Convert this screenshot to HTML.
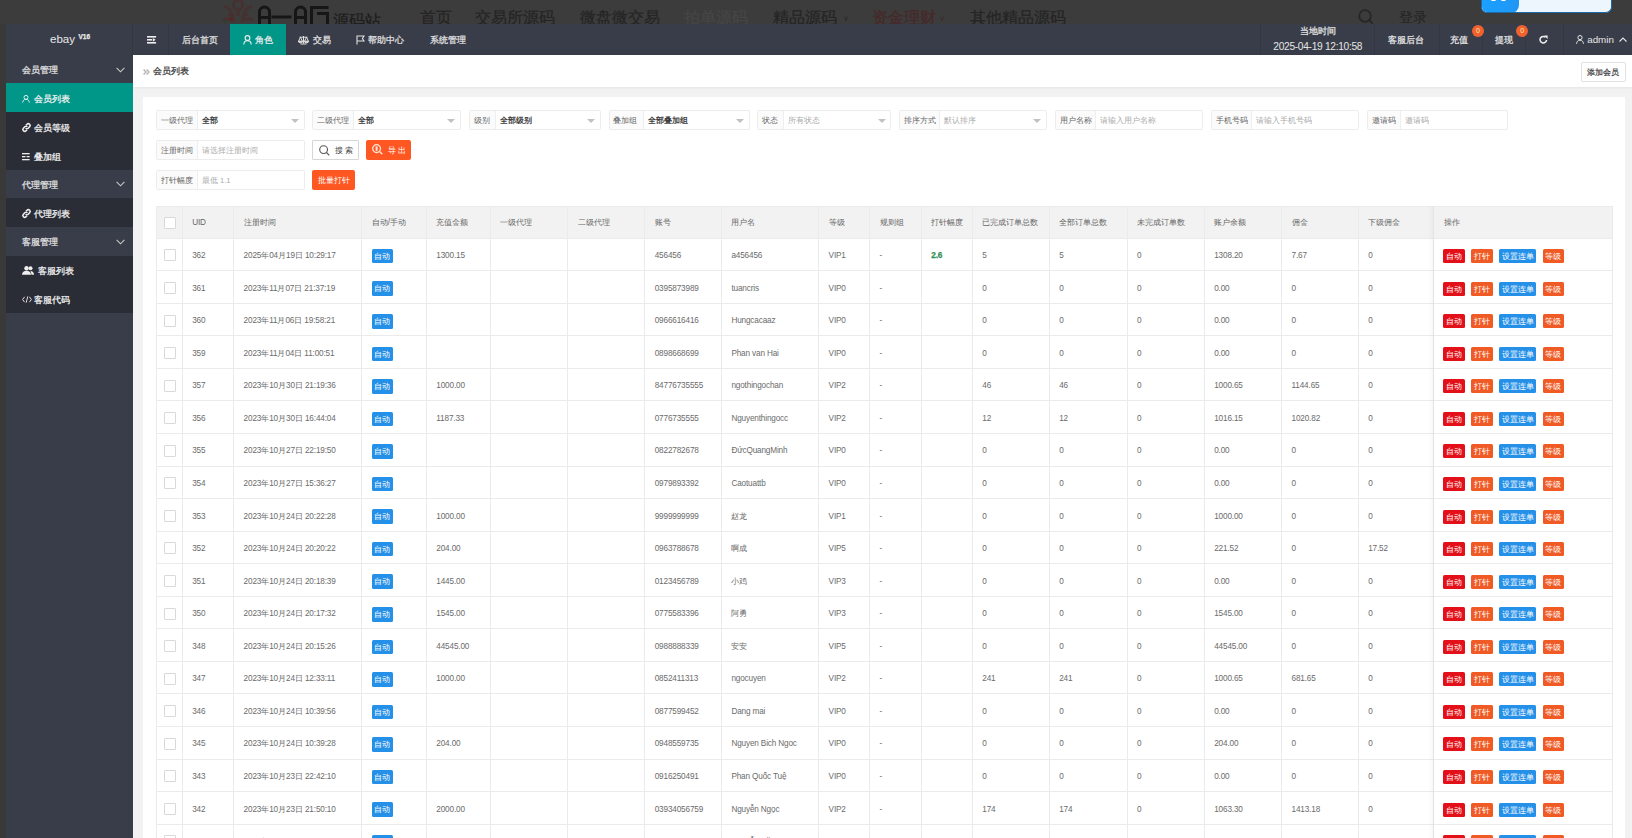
<!DOCTYPE html>
<html><head><meta charset="utf-8"><title>member list</title>
<style>
*{margin:0;padding:0;box-sizing:border-box}
html,body{width:1632px;height:838px;overflow:hidden}
body{position:relative;background:#f2f2f2;font-family:"Liberation Sans",sans-serif;color:#666}
.ab{position:absolute}
.t{position:absolute;white-space:nowrap}
.s{-webkit-text-stroke:0.25px currentColor}
svg{position:absolute;overflow:visible}
</style></head><body>

<div class="ab" style="left:0;top:0;width:1632px;height:24px;background:#3c3c3c;overflow:hidden">
<svg style="left:222px;top:0" width="36" height="24" viewBox="0 0 36 24"><g fill="none" stroke="#4a2e2e" stroke-width="2.6" opacity="0.85"><ellipse cx="16" cy="5" rx="4.5" ry="5"/><path d="M16 10v6M2 6c4 1 8 5 9 11M30 6c-4 1-8 5-9 11M6 14c3 0 5 3 6 8M26 14c-3 0-5 3-6 8M1 20c3-2 6-2 9 1M31 20c-3-2-6-2-9 1"/></g><circle cx="9" cy="19" r="2" fill="#5a2424"/><circle cx="4" cy="22" r="1.5" fill="#2f3f30"/></svg>
<svg style="left:257px;top:5px" width="74" height="20" viewBox="0 0 74 20"><g fill="none" stroke="#161616" stroke-width="3"><path d="M2.5 20V7a5 5 0 0 1 10 0v13M2.5 12.5h10"/><path d="M14.5 12h20"/><path d="M38.5 20V7a5 5 0 0 1 10 0v13M38.5 12.5h10"/><path d="M54.5 20V2.5h17M60 8.5h10.5V20"/></g></svg>
<div class="t s" style="left:333.00px;top:13.20px;font-size:16px;line-height:16px;color:#1c1c1c;letter-spacing:0px">源码站</div>
<div class="t s" style="left:420.00px;top:9.30px;font-size:16.2px;line-height:16.2px;color:#242424;">首页</div>
<div class="t s" style="left:474.80px;top:9.30px;font-size:16.2px;line-height:16.2px;color:#242424;">交易所源码</div>
<div class="t s" style="left:580.00px;top:9.30px;font-size:16.2px;line-height:16.2px;color:#242424;">微盘微交易</div>
<div class="t s" style="left:684.00px;top:9.30px;font-size:16.2px;line-height:16.2px;color:#464646;">拍单源码</div>
<div class="t s" style="left:773.00px;top:9.30px;font-size:16.2px;line-height:16.2px;color:#242424;">精品源码</div>
<div class="t s" style="left:872.40px;top:9.30px;font-size:16.2px;line-height:16.2px;color:#472828;">资金理财</div>
<div class="t s" style="left:970.40px;top:9.30px;font-size:16.2px;line-height:16.2px;color:#242424;">其他精品源码</div>
<div class="t " style="left:843.00px;top:15.40px;font-size:8px;line-height:8px;color:#2a2a2a;">&#8744;</div>
<div class="t " style="left:939.00px;top:15.40px;font-size:8px;line-height:8px;color:#3a2a2a;">&#8744;</div>
<svg style="left:1358px;top:8.5px" width="16" height="16" viewBox="0 0 16 16"><g fill="none" stroke="#262626" stroke-width="1.8"><circle cx="7" cy="7" r="5.8"/><path d="M11.2 11.2l3.6 3.6"/></g></svg>
<div class="t " style="left:1398.80px;top:9.70px;font-size:14px;line-height:14px;color:#222;">登录</div>
<div class="ab" style="left:1481px;top:-6px;width:131px;height:19px;background:#eef6fd;border:1px solid #1b6aa6;border-top:none;border-radius:0 0 6px 6px;overflow:hidden"><div class="ab" style="left:0;top:0;width:37px;height:19px;background:linear-gradient(90deg,#1aa0ff,#2196f3);border-radius:0 0 8px 6px"></div><div class="ab" style="left:9px;top:4px;width:5px;height:3px;background:#fff;border-radius:2px"></div><div class="ab" style="left:19px;top:4px;width:5px;height:3px;background:#fff;border-radius:2px"></div></div>
</div>
<div class="ab" style="left:0.00px;top:24.00px;width:6.00px;height:814.00px;background:#393937;"></div>
<div class="ab" style="left:6.00px;top:24.00px;width:1626.00px;height:31.00px;background:#393d49;"></div>
<div class="ab" style="left:132.00px;top:24.00px;width:1.00px;height:31.00px;background:#343742;"></div>
<div class="ab" style="left:168.00px;top:24.00px;width:1.00px;height:31.00px;background:#343742;"></div>
<div class="ab" style="left:1260.00px;top:24.00px;width:1.00px;height:31.00px;background:#343742;"></div>
<div class="ab" style="left:1374.00px;top:24.00px;width:1.00px;height:31.00px;background:#343742;"></div>
<div class="ab" style="left:1438.50px;top:24.00px;width:1.00px;height:31.00px;background:#343742;"></div>
<div class="ab" style="left:1482.00px;top:24.00px;width:1.00px;height:31.00px;background:#343742;"></div>
<div class="ab" style="left:1525.00px;top:24.00px;width:1.00px;height:31.00px;background:#343742;"></div>
<div class="ab" style="left:1562.50px;top:24.00px;width:1.00px;height:31.00px;background:#343742;"></div>
<div class="t " style="left:50.00px;top:33.85px;font-size:11.5px;line-height:11.5px;color:#e9e9e9;">ebay</div>
<div class="t s" style="left:78.50px;top:34.15px;font-size:6.5px;line-height:6.5px;color:#e9e9e9;font-weight:bold">V16</div>
<svg style="left:146.9px;top:35.6px" width="10" height="8" viewBox="0 0 10 8"><g fill="#eeeeee"><rect x="0" y="0" width="9.1" height="1.6"/><rect x="0" y="3" width="5.2" height="1.6"/><rect x="0" y="6" width="9.1" height="1.6"/><path d="M5.9 1.9L8.6 3.8L5.9 5.7z"/></g></svg>
<div class="t s" style="left:181.50px;top:35.90px;font-size:9px;line-height:9px;color:#e0e0e0;">后台首页</div>
<div class="ab" style="left:230.00px;top:24.00px;width:56.00px;height:31.00px;background:#009688;"></div>
<svg style="left:243px;top:34.5px" width="9" height="10" viewBox="0 0 9 10"><g fill="none" stroke="#eee" stroke-width="1.1"><circle cx="4.5" cy="3" r="2.4"/><path d="M0.8 9.6c0-2.4 1.6-3.9 3.7-3.9s3.7 1.5 3.7 3.9"/></g></svg>
<div class="t s" style="left:254.50px;top:35.90px;font-size:9px;line-height:9px;color:#eeeeee;">角色</div>
<svg style="left:298px;top:34.8px" width="11" height="10" viewBox="0 0 11 10"><g fill="none" stroke="#e0e0e0" stroke-width="1"><path d="M5.5 1v7.5M1.5 2.2h8M2.5 2.2L0.6 6.2M2.5 2.2L4.4 6.2M8.5 2.2L6.6 6.2M8.5 2.2L10.4 6.2M2.5 9h6"/><path d="M0.4 6.2h4.2a2.1 1.6 0 0 1-4.2 0zM6.4 6.2h4.2a2.1 1.6 0 0 1-4.2 0z" fill="#e0e0e0"/></g></svg>
<div class="t s" style="left:312.50px;top:35.90px;font-size:9px;line-height:9px;color:#e0e0e0;">交易</div>
<svg style="left:356px;top:34.5px" width="9" height="10" viewBox="0 0 9 10"><g fill="none" stroke="#e0e0e0" stroke-width="1.1"><path d="M1 0.5v9M1 1h7l-1.6 2.5L8 6H1"/></g></svg>
<div class="t s" style="left:368.00px;top:35.90px;font-size:9px;line-height:9px;color:#e0e0e0;">帮助中心</div>
<div class="t s" style="left:430.00px;top:35.90px;font-size:9px;line-height:9px;color:#e0e0e0;">系统管理</div>
<div class="t s" style="left:1299.60px;top:27.42px;font-size:8.75px;line-height:8.75px;color:#e6e6e6;">当地时间</div>
<div class="t " style="left:1273.30px;top:41.70px;font-size:10.2px;line-height:10.2px;color:#e6e6e6;letter-spacing:-0.3px">2025-04-19 12:10:58</div>
<div class="t s" style="left:1388.00px;top:35.90px;font-size:9px;line-height:9px;color:#e6e6e6;">客服后台</div>
<div class="t s" style="left:1450.40px;top:36.05px;font-size:8.7px;line-height:8.7px;color:#e6e6e6;">充值</div>
<div class="t s" style="left:1495.00px;top:36.05px;font-size:8.7px;line-height:8.7px;color:#e6e6e6;">提现</div>
<div class="ab" style="left:1472.0px;top:25px;width:12px;height:12px;border-radius:50%;background:#f0612e;color:#ffe9b0;font-size:7px;line-height:12px;text-align:center">0</div>
<div class="ab" style="left:1516.2px;top:25px;width:12px;height:12px;border-radius:50%;background:#f0612e;color:#ffe9b0;font-size:7px;line-height:12px;text-align:center">0</div>
<svg style="left:1539px;top:35px" width="9" height="9" viewBox="0 0 9 9"><g fill="none" stroke="#f0f0f0" stroke-width="1.5"><path d="M7.6 5a3.3 3.3 0 1 1-1-2.7"/></g><path d="M5.2 0.6L8.6 0.6L8.6 4z" fill="#f0f0f0"/></svg>
<svg style="left:1576px;top:35px" width="8" height="9" viewBox="0 0 8 9"><g fill="none" stroke="#e6e6e6" stroke-width="1"><circle cx="4" cy="2.6" r="2.1"/><path d="M0.6 8.8c0-2.2 1.4-3.6 3.4-3.6s3.4 1.4 3.4 3.6"/></g></svg>
<div class="t " style="left:1587.20px;top:34.70px;font-size:9.8px;line-height:9.8px;color:#e6e6e6;">admin</div>
<svg style="left:1619px;top:37px" width="8" height="5" viewBox="0 0 8 5"><path d="M0.5 4.5L4 1l3.5 3.5" fill="none" stroke="#e6e6e6" stroke-width="1.1"/></svg>
<div class="ab" style="left:6.00px;top:55.00px;width:127.00px;height:783.00px;background:#393d49;"></div>
<div class="ab" style="left:6.00px;top:83.20px;width:127.00px;height:86.40px;background:#2a2d36;"></div>
<div class="ab" style="left:6.00px;top:198.20px;width:127.00px;height:28.60px;background:#2a2d36;"></div>
<div class="ab" style="left:6.00px;top:255.50px;width:127.00px;height:57.20px;background:#2a2d36;"></div>
<div class="ab" style="left:6.00px;top:83.20px;width:127.00px;height:29.00px;background:#009688;"></div>
<div class="t s" style="left:22.00px;top:66.00px;font-size:9px;line-height:9px;color:#e2e2e2;">会员管理</div>
<svg style="left:115.5px;top:66.6px" width="9" height="6" viewBox="0 0 9 6"><path d="M0.6 0.8L4.5 4.8L8.4 0.8" fill="none" stroke="#c9c9c9" stroke-width="1.1"/></svg>
<div class="t s" style="left:22.00px;top:180.80px;font-size:9px;line-height:9px;color:#e2e2e2;">代理管理</div>
<svg style="left:115.5px;top:181.4px" width="9" height="6" viewBox="0 0 9 6"><path d="M0.6 0.8L4.5 4.8L8.4 0.8" fill="none" stroke="#c9c9c9" stroke-width="1.1"/></svg>
<div class="t s" style="left:22.00px;top:238.05px;font-size:9px;line-height:9px;color:#e2e2e2;">客服管理</div>
<svg style="left:115.5px;top:238.7px" width="9" height="6" viewBox="0 0 9 6"><path d="M0.6 0.8L4.5 4.8L8.4 0.8" fill="none" stroke="#c9c9c9" stroke-width="1.1"/></svg>
<svg style="left:22.4px;top:94.5px" width="8" height="8" viewBox="0 0 8 8"><g fill="none" stroke="#d8f2ee" stroke-width="1"><circle cx="4" cy="2.4" r="2"/><path d="M0.7 7.6c0-2 1.4-3.3 3.3-3.3s3.3 1.3 3.3 3.3"/></g></svg>
<div class="t s" style="left:34.40px;top:94.90px;font-size:9px;line-height:9px;color:#f2f2f2;">会员列表</div>
<svg style="left:22px;top:122.9px" width="9" height="9" viewBox="0 0 9 9"><g fill="none" stroke="#eee" stroke-width="1.6"><path d="M4 2.2l1-1a1.8 1.8 0 0 1 2.6 2.6l-1.4 1.4a1.8 1.8 0 0 1-2.6 0"/><path d="M5 6.8l-1 1a1.8 1.8 0 0 1-2.6-2.6l1.4-1.4a1.8 1.8 0 0 1 2.6 0"/></g></svg>
<div class="t s" style="left:34.40px;top:123.80px;font-size:9px;line-height:9px;color:#f2f2f2;">会员等级</div>
<svg style="left:22.4px;top:152.5px" width="8" height="8" viewBox="0 0 8 8"><g fill="#eee"><rect x="0" y="0" width="7.6" height="1.3"/><rect x="0" y="3" width="3.4" height="1.3"/><rect x="4.6" y="3" width="3" height="1.3"/><rect x="0" y="6" width="7.6" height="1.3"/></g></svg>
<div class="t s" style="left:34.40px;top:152.50px;font-size:9px;line-height:9px;color:#f2f2f2;">叠加组</div>
<svg style="left:22px;top:208.8px" width="9" height="9" viewBox="0 0 9 9"><g fill="none" stroke="#eee" stroke-width="1.6"><path d="M4 2.2l1-1a1.8 1.8 0 0 1 2.6 2.6l-1.4 1.4a1.8 1.8 0 0 1-2.6 0"/><path d="M5 6.8l-1 1a1.8 1.8 0 0 1-2.6-2.6l1.4-1.4a1.8 1.8 0 0 1 2.6 0"/></g></svg>
<div class="t s" style="left:34.40px;top:209.70px;font-size:9px;line-height:9px;color:#f2f2f2;">代理列表</div>
<svg style="left:22px;top:266.1px" width="12" height="9" viewBox="0 0 12 9"><g fill="#eee"><circle cx="4.5" cy="2.3" r="2.2"/><path d="M0 8.8c0-2.6 2-4 4.5-4s4.5 1.4 4.5 4z"/><circle cx="8.5" cy="2.3" r="2"/><path d="M9.6 8.8H12c0-2.4-1.5-3.8-3.5-3.8"/></g></svg>
<div class="t s" style="left:37.50px;top:267.00px;font-size:9px;line-height:9px;color:#f2f2f2;">客服列表</div>
<svg style="left:22px;top:295.7px" width="10" height="7" viewBox="0 0 10 7"><g fill="none" stroke="#ddd" stroke-width="1"><path d="M2.6 0.8L0.6 3.5l2 2.7M7.4 0.8l2 2.7-2 2.7M5.8 0.4L4.2 6.6"/></g></svg>
<div class="t s" style="left:34.40px;top:295.60px;font-size:9px;line-height:9px;color:#f2f2f2;">客服代码</div>
<div class="ab" style="left:133.00px;top:55.00px;width:1499.00px;height:32.00px;background:#fff;box-shadow:0 1px 2px rgba(0,0,0,.06)"></div>
<svg style="left:142.5px;top:68.8px" width="7" height="6" viewBox="0 0 7 6"><g fill="none" stroke="#b4b4b4" stroke-width="1.4"><path d="M0.6 0.5L3 3L0.6 5.5M3.6 0.5L6 3L3.6 5.5"/></g></svg>
<div class="t s" style="left:152.50px;top:67.30px;font-size:9px;line-height:9px;color:#3c3c3c;">会员列表</div>
<div class="ab" style="left:1581px;top:62px;width:44.5px;height:19.5px;border:1px solid #e2e2e2;border-radius:2px;background:#fff;font-size:7.7px;line-height:19.5px;text-align:center;color:#3a3a3a;-webkit-text-stroke:0.2px #3a3a3a">添加会员</div>
<div class="ab" style="left:143.00px;top:97.00px;width:1481.50px;height:741.00px;background:#fff;"></div>
<div class="ab" style="left:156.00px;top:110.00px;width:149.00px;height:20px;border:1px solid #ececec;border-radius:2px;background:#fff"></div>
<div class="ab" style="left:157.00px;top:111.00px;width:39.90px;height:18.00px;background:#fbfbfb;"></div>
<div class="ab" style="left:196.90px;top:111.00px;width:1.00px;height:18.00px;background:#eeeeee;"></div>
<div class="t " style="left:160.90px;top:117.35px;font-size:7.5px;line-height:7.5px;color:#666;">一级代理</div>
<div class="t s" style="left:201.90px;top:117.30px;font-size:7.6px;line-height:7.6px;color:#333;">全部</div>
<svg style="left:291.00px;top:118.50px" width="8" height="4" viewBox="0 0 8 4"><path d="M0 0h8L4 4z" fill="#c2c2c2"/></svg>
<div class="ab" style="left:312.00px;top:110.00px;width:149.40px;height:20px;border:1px solid #ececec;border-radius:2px;background:#fff"></div>
<div class="ab" style="left:313.00px;top:111.00px;width:39.90px;height:18.00px;background:#fbfbfb;"></div>
<div class="ab" style="left:352.90px;top:111.00px;width:1.00px;height:18.00px;background:#eeeeee;"></div>
<div class="t " style="left:316.90px;top:117.35px;font-size:7.5px;line-height:7.5px;color:#666;">二级代理</div>
<div class="t s" style="left:357.90px;top:117.30px;font-size:7.6px;line-height:7.6px;color:#333;">全部</div>
<svg style="left:447.40px;top:118.50px" width="8" height="4" viewBox="0 0 8 4"><path d="M0 0h8L4 4z" fill="#c2c2c2"/></svg>
<div class="ab" style="left:468.80px;top:110.00px;width:132.40px;height:20px;border:1px solid #ececec;border-radius:2px;background:#fff"></div>
<div class="ab" style="left:469.80px;top:111.00px;width:25.00px;height:18.00px;background:#fbfbfb;"></div>
<div class="ab" style="left:494.80px;top:111.00px;width:1.00px;height:18.00px;background:#eeeeee;"></div>
<div class="t " style="left:473.70px;top:117.35px;font-size:7.5px;line-height:7.5px;color:#666;">级别</div>
<div class="t s" style="left:499.80px;top:117.30px;font-size:7.6px;line-height:7.6px;color:#333;">全部级别</div>
<svg style="left:587.20px;top:118.50px" width="8" height="4" viewBox="0 0 8 4"><path d="M0 0h8L4 4z" fill="#c2c2c2"/></svg>
<div class="ab" style="left:608.50px;top:110.00px;width:141.90px;height:20px;border:1px solid #ececec;border-radius:2px;background:#fff"></div>
<div class="ab" style="left:609.50px;top:111.00px;width:33.50px;height:18.00px;background:#fbfbfb;"></div>
<div class="ab" style="left:643.00px;top:111.00px;width:1.00px;height:18.00px;background:#eeeeee;"></div>
<div class="t " style="left:613.40px;top:117.35px;font-size:7.5px;line-height:7.5px;color:#666;">叠加组</div>
<div class="t s" style="left:648.00px;top:117.30px;font-size:7.6px;line-height:7.6px;color:#333;">全部叠加组</div>
<svg style="left:736.40px;top:118.50px" width="8" height="4" viewBox="0 0 8 4"><path d="M0 0h8L4 4z" fill="#c2c2c2"/></svg>
<div class="ab" style="left:757.40px;top:110.00px;width:134.10px;height:20px;border:1px solid #ececec;border-radius:2px;background:#fff"></div>
<div class="ab" style="left:758.40px;top:111.00px;width:25.00px;height:18.00px;background:#fbfbfb;"></div>
<div class="ab" style="left:783.40px;top:111.00px;width:1.00px;height:18.00px;background:#eeeeee;"></div>
<div class="t " style="left:762.30px;top:117.35px;font-size:7.5px;line-height:7.5px;color:#666;">状态</div>
<div class="t " style="left:788.40px;top:117.30px;font-size:7.6px;line-height:7.6px;color:#aaa;">所有状态</div>
<svg style="left:877.50px;top:118.50px" width="8" height="4" viewBox="0 0 8 4"><path d="M0 0h8L4 4z" fill="#c2c2c2"/></svg>
<div class="ab" style="left:898.90px;top:110.00px;width:148.50px;height:20px;border:1px solid #ececec;border-radius:2px;background:#fff"></div>
<div class="ab" style="left:899.90px;top:111.00px;width:39.50px;height:18.00px;background:#fbfbfb;"></div>
<div class="ab" style="left:939.40px;top:111.00px;width:1.00px;height:18.00px;background:#eeeeee;"></div>
<div class="t " style="left:903.80px;top:117.35px;font-size:7.5px;line-height:7.5px;color:#666;">排序方式</div>
<div class="t " style="left:944.40px;top:117.30px;font-size:7.6px;line-height:7.6px;color:#aaa;">默认排序</div>
<svg style="left:1033.40px;top:118.50px" width="8" height="4" viewBox="0 0 8 4"><path d="M0 0h8L4 4z" fill="#c2c2c2"/></svg>
<div class="ab" style="left:1054.70px;top:110.00px;width:148.50px;height:20px;border:1px solid #ececec;border-radius:2px;background:#fff"></div>
<div class="ab" style="left:1055.70px;top:111.00px;width:39.50px;height:18.00px;background:#fbfbfb;"></div>
<div class="ab" style="left:1095.20px;top:111.00px;width:1.00px;height:18.00px;background:#eeeeee;"></div>
<div class="t " style="left:1059.60px;top:117.35px;font-size:7.5px;line-height:7.5px;color:#666;">用户名称</div>
<div class="t " style="left:1100.20px;top:117.30px;font-size:7.6px;line-height:7.6px;color:#aaa;">请输入用户名称</div>
<div class="ab" style="left:1210.60px;top:110.00px;width:148.80px;height:20px;border:1px solid #ececec;border-radius:2px;background:#fff"></div>
<div class="ab" style="left:1211.60px;top:111.00px;width:39.50px;height:18.00px;background:#fbfbfb;"></div>
<div class="ab" style="left:1251.10px;top:111.00px;width:1.00px;height:18.00px;background:#eeeeee;"></div>
<div class="t " style="left:1215.50px;top:117.35px;font-size:7.5px;line-height:7.5px;color:#666;">手机号码</div>
<div class="t " style="left:1256.10px;top:117.30px;font-size:7.6px;line-height:7.6px;color:#aaa;">请输入手机号码</div>
<div class="ab" style="left:1366.80px;top:110.00px;width:141.20px;height:20px;border:1px solid #ececec;border-radius:2px;background:#fff"></div>
<div class="ab" style="left:1367.80px;top:111.00px;width:32.60px;height:18.00px;background:#fbfbfb;"></div>
<div class="ab" style="left:1400.40px;top:111.00px;width:1.00px;height:18.00px;background:#eeeeee;"></div>
<div class="t " style="left:1371.70px;top:117.35px;font-size:7.5px;line-height:7.5px;color:#666;">邀请码</div>
<div class="t " style="left:1405.40px;top:117.30px;font-size:7.6px;line-height:7.6px;color:#aaa;">邀请码</div>
<div class="ab" style="left:156.00px;top:140.00px;width:149.00px;height:20px;border:1px solid #ececec;border-radius:2px;background:#fff"></div>
<div class="ab" style="left:157.00px;top:141.00px;width:39.90px;height:18.00px;background:#fbfbfb;"></div>
<div class="ab" style="left:196.90px;top:141.00px;width:1.00px;height:18.00px;background:#eeeeee;"></div>
<div class="t " style="left:160.90px;top:147.35px;font-size:7.5px;line-height:7.5px;color:#666;">注册时间</div>
<div class="t " style="left:201.90px;top:147.30px;font-size:7.6px;line-height:7.6px;color:#aaa;">请选择注册时间</div>
<div class="ab" style="left:312px;top:139.5px;width:46.7px;height:20.2px;border:1px solid #d6d6d6;border-radius:1px;background:#fff"></div>
<svg style="left:319px;top:144.5px" width="11" height="11" viewBox="0 0 11 11"><g fill="none" stroke="#555" stroke-width="1.1"><circle cx="4.6" cy="4.6" r="3.9"/><path d="M7.5 7.5l2.8 2.8"/></g></svg>
<div class="t " style="left:334.70px;top:146.75px;font-size:7.7px;line-height:7.7px;color:#444;">搜&nbsp;索</div>
<div class="ab" style="left:365.50px;top:140.00px;width:45.10px;height:19.80px;background:#ff5722;border-radius:2px"></div>
<svg style="left:372px;top:144px" width="11" height="11" viewBox="0 0 11 11"><g fill="none" stroke="#ffe6d8" stroke-width="1.3"><circle cx="4.6" cy="4.6" r="3.9"/><path d="M7.5 7.5l2.8 2.8"/></g><path d="M3.6 2.4h2v4.4h-2z" fill="#ffe6d8"/></svg>
<div class="t " style="left:388.00px;top:146.85px;font-size:7.7px;line-height:7.7px;color:#fff;">导&nbsp;出</div>
<div class="ab" style="left:156.00px;top:170.00px;width:149.00px;height:20px;border:1px solid #ececec;border-radius:2px;background:#fff"></div>
<div class="ab" style="left:157.00px;top:171.00px;width:39.90px;height:18.00px;background:#fbfbfb;"></div>
<div class="ab" style="left:196.90px;top:171.00px;width:1.00px;height:18.00px;background:#eeeeee;"></div>
<div class="t " style="left:160.90px;top:177.35px;font-size:7.5px;line-height:7.5px;color:#666;">打针幅度</div>
<div class="t " style="left:201.90px;top:177.30px;font-size:7.6px;line-height:7.6px;color:#aaa;">最低 1.1</div>
<div class="ab" style="left:312.20px;top:169.70px;width:42.50px;height:20.10px;background:#ff5722;border-radius:2px"></div>
<div class="t " style="left:318.20px;top:176.95px;font-size:7.5px;line-height:7.5px;color:#fff;">批量打针</div>
<div class="ab" style="left:156.00px;top:206.00px;width:1456.50px;height:32.10px;background:#f2f2f2;"></div>
<div class="ab" style="left:156px;top:206.0px;width:1456.50px;height:650.74px;border:1px solid #ebebeb;border-bottom:none"></div>
<div class="ab" style="left:156.00px;top:237.60px;width:1456.50px;height:1.00px;background:#ebebeb;"></div>
<div class="ab" style="left:156.00px;top:270.16px;width:1456.50px;height:1.00px;background:#ebebeb;"></div>
<div class="ab" style="left:156.00px;top:302.72px;width:1456.50px;height:1.00px;background:#ebebeb;"></div>
<div class="ab" style="left:156.00px;top:335.28px;width:1456.50px;height:1.00px;background:#ebebeb;"></div>
<div class="ab" style="left:156.00px;top:367.84px;width:1456.50px;height:1.00px;background:#ebebeb;"></div>
<div class="ab" style="left:156.00px;top:400.40px;width:1456.50px;height:1.00px;background:#ebebeb;"></div>
<div class="ab" style="left:156.00px;top:432.96px;width:1456.50px;height:1.00px;background:#ebebeb;"></div>
<div class="ab" style="left:156.00px;top:465.52px;width:1456.50px;height:1.00px;background:#ebebeb;"></div>
<div class="ab" style="left:156.00px;top:498.08px;width:1456.50px;height:1.00px;background:#ebebeb;"></div>
<div class="ab" style="left:156.00px;top:530.64px;width:1456.50px;height:1.00px;background:#ebebeb;"></div>
<div class="ab" style="left:156.00px;top:563.20px;width:1456.50px;height:1.00px;background:#ebebeb;"></div>
<div class="ab" style="left:156.00px;top:595.76px;width:1456.50px;height:1.00px;background:#ebebeb;"></div>
<div class="ab" style="left:156.00px;top:628.32px;width:1456.50px;height:1.00px;background:#ebebeb;"></div>
<div class="ab" style="left:156.00px;top:660.88px;width:1456.50px;height:1.00px;background:#ebebeb;"></div>
<div class="ab" style="left:156.00px;top:693.44px;width:1456.50px;height:1.00px;background:#ebebeb;"></div>
<div class="ab" style="left:156.00px;top:726.00px;width:1456.50px;height:1.00px;background:#ebebeb;"></div>
<div class="ab" style="left:156.00px;top:758.56px;width:1456.50px;height:1.00px;background:#ebebeb;"></div>
<div class="ab" style="left:156.00px;top:791.12px;width:1456.50px;height:1.00px;background:#ebebeb;"></div>
<div class="ab" style="left:156.00px;top:823.68px;width:1456.50px;height:1.00px;background:#ebebeb;"></div>
<div class="ab" style="left:156.00px;top:856.24px;width:1456.50px;height:1.00px;background:#ebebeb;"></div>
<div class="ab" style="left:181.70px;top:206.00px;width:1.00px;height:650.74px;background:#ebebeb;"></div>
<div class="ab" style="left:233.10px;top:206.00px;width:1.00px;height:650.74px;background:#ebebeb;"></div>
<div class="ab" style="left:361.30px;top:206.00px;width:1.00px;height:650.74px;background:#ebebeb;"></div>
<div class="ab" style="left:425.80px;top:206.00px;width:1.00px;height:650.74px;background:#ebebeb;"></div>
<div class="ab" style="left:489.90px;top:206.00px;width:1.00px;height:650.74px;background:#ebebeb;"></div>
<div class="ab" style="left:567.00px;top:206.00px;width:1.00px;height:650.74px;background:#ebebeb;"></div>
<div class="ab" style="left:644.20px;top:206.00px;width:1.00px;height:650.74px;background:#ebebeb;"></div>
<div class="ab" style="left:720.90px;top:206.00px;width:1.00px;height:650.74px;background:#ebebeb;"></div>
<div class="ab" style="left:818.10px;top:206.00px;width:1.00px;height:650.74px;background:#ebebeb;"></div>
<div class="ab" style="left:869.00px;top:206.00px;width:1.00px;height:650.74px;background:#ebebeb;"></div>
<div class="ab" style="left:920.80px;top:206.00px;width:1.00px;height:650.74px;background:#ebebeb;"></div>
<div class="ab" style="left:971.80px;top:206.00px;width:1.00px;height:650.74px;background:#ebebeb;"></div>
<div class="ab" style="left:1048.70px;top:206.00px;width:1.00px;height:650.74px;background:#ebebeb;"></div>
<div class="ab" style="left:1126.50px;top:206.00px;width:1.00px;height:650.74px;background:#ebebeb;"></div>
<div class="ab" style="left:1203.70px;top:206.00px;width:1.00px;height:650.74px;background:#ebebeb;"></div>
<div class="ab" style="left:1281.00px;top:206.00px;width:1.00px;height:650.74px;background:#ebebeb;"></div>
<div class="ab" style="left:1357.70px;top:206.00px;width:1.00px;height:650.74px;background:#ebebeb;"></div>
<div class="ab" style="left:1433.00px;top:206.00px;width:1.00px;height:650.74px;background:#ebebeb;"></div>
<div class="ab" style="left:1427.50px;top:206.00px;width:6px;height:650.74px;background:linear-gradient(90deg,rgba(0,0,0,0),rgba(0,0,0,.035))"></div>
<div class="ab" style="left:163.5px;top:216.65px;width:12px;height:12px;border:1px solid #d9d9d9;border-radius:1px;background:#fff"></div>
<div class="t " style="left:192.20px;top:219.35px;font-size:8.0px;line-height:8.0px;color:#666;"><span style="font-size:8.2px;letter-spacing:-0.15px">UID</span></div>
<div class="t " style="left:243.60px;top:219.35px;font-size:8.0px;line-height:8.0px;color:#666;"><span style="font-size:7.7px">注册时间</span></div>
<div class="t " style="left:371.80px;top:219.35px;font-size:8.0px;line-height:8.0px;color:#666;"><span style="font-size:7.7px">自动</span><span style="font-size:8.2px;letter-spacing:-0.15px">/</span><span style="font-size:7.7px">手动</span></div>
<div class="t " style="left:436.30px;top:219.35px;font-size:8.0px;line-height:8.0px;color:#666;"><span style="font-size:7.7px">充值金额</span></div>
<div class="t " style="left:500.40px;top:219.35px;font-size:8.0px;line-height:8.0px;color:#666;"><span style="font-size:7.7px">一级代理</span></div>
<div class="t " style="left:577.50px;top:219.35px;font-size:8.0px;line-height:8.0px;color:#666;"><span style="font-size:7.7px">二级代理</span></div>
<div class="t " style="left:654.70px;top:219.35px;font-size:8.0px;line-height:8.0px;color:#666;"><span style="font-size:7.7px">账号</span></div>
<div class="t " style="left:731.40px;top:219.35px;font-size:8.0px;line-height:8.0px;color:#666;"><span style="font-size:7.7px">用户名</span></div>
<div class="t " style="left:828.60px;top:219.35px;font-size:8.0px;line-height:8.0px;color:#666;"><span style="font-size:7.7px">等级</span></div>
<div class="t " style="left:879.50px;top:219.35px;font-size:8.0px;line-height:8.0px;color:#666;"><span style="font-size:7.7px">规则组</span></div>
<div class="t " style="left:931.30px;top:219.35px;font-size:8.0px;line-height:8.0px;color:#666;"><span style="font-size:7.7px">打针幅度</span></div>
<div class="t " style="left:982.30px;top:219.35px;font-size:8.0px;line-height:8.0px;color:#666;"><span style="font-size:7.7px">已完成订单总数</span></div>
<div class="t " style="left:1059.20px;top:219.35px;font-size:8.0px;line-height:8.0px;color:#666;"><span style="font-size:7.7px">全部订单总数</span></div>
<div class="t " style="left:1137.00px;top:219.35px;font-size:8.0px;line-height:8.0px;color:#666;"><span style="font-size:7.7px">未完成订单数</span></div>
<div class="t " style="left:1214.20px;top:219.35px;font-size:8.0px;line-height:8.0px;color:#666;"><span style="font-size:7.7px">账户余额</span></div>
<div class="t " style="left:1291.50px;top:219.35px;font-size:8.0px;line-height:8.0px;color:#666;"><span style="font-size:7.7px">佣金</span></div>
<div class="t " style="left:1368.20px;top:219.35px;font-size:8.0px;line-height:8.0px;color:#666;"><span style="font-size:7.7px">下级佣金</span></div>
<div class="t " style="left:1443.50px;top:219.35px;font-size:8.0px;line-height:8.0px;color:#666;"><span style="font-size:7.7px">操作</span></div>
<div class="ab" style="left:163.5px;top:249.38px;width:12px;height:12px;border:1px solid #d9d9d9;border-radius:1px;background:#fff"></div>
<div class="t " style="left:192.20px;top:252.08px;font-size:8.0px;line-height:8.0px;color:#6b6b6b;"><span style="font-size:8.2px;letter-spacing:-0.15px">362</span></div>
<div class="t " style="left:243.60px;top:252.08px;font-size:8.0px;line-height:8.0px;color:#6b6b6b;"><span style="font-size:8.2px;letter-spacing:-0.15px">2025</span><span style="font-size:7.7px">年</span><span style="font-size:8.2px;letter-spacing:-0.15px">04</span><span style="font-size:7.7px">月</span><span style="font-size:8.2px;letter-spacing:-0.15px">19</span><span style="font-size:7.7px">日</span><span style="font-size:8.2px;letter-spacing:-0.15px"> 10:29:17</span></div>
<div class="ab" style="left:371.80px;top:248.88px;width:21.4px;height:14.5px;background:#2590e8;border-radius:1.5px;color:#fff;font-size:7.5px;line-height:16.5px;overflow:hidden;text-align:center">自动</div>
<div class="t " style="left:436.30px;top:252.08px;font-size:8.0px;line-height:8.0px;color:#6b6b6b;"><span style="font-size:8.2px;letter-spacing:-0.15px">1300.15</span></div>
<div class="t " style="left:654.70px;top:252.08px;font-size:8.0px;line-height:8.0px;color:#6b6b6b;"><span style="font-size:8.2px;letter-spacing:-0.15px">456456</span></div>
<div class="t " style="left:731.40px;top:252.08px;font-size:8.0px;line-height:8.0px;color:#6b6b6b;"><span style="font-size:8.2px;letter-spacing:-0.15px">a456456</span></div>
<div class="t " style="left:828.60px;top:252.08px;font-size:8.0px;line-height:8.0px;color:#6b6b6b;"><span style="font-size:8.2px;letter-spacing:-0.15px">VIP1</span></div>
<div class="t " style="left:879.50px;top:252.08px;font-size:8.0px;line-height:8.0px;color:#6b6b6b;"><span style="font-size:8.2px;letter-spacing:-0.15px">-</span></div>
<div class="t s" style="left:931.30px;top:252.08px;font-size:8.0px;line-height:8.0px;color:#2f9055;font-weight:bold"><span style="font-size:8.2px;letter-spacing:-0.15px">2.6</span></div>
<div class="t " style="left:982.30px;top:252.08px;font-size:8.0px;line-height:8.0px;color:#6b6b6b;"><span style="font-size:8.2px;letter-spacing:-0.15px">5</span></div>
<div class="t " style="left:1059.20px;top:252.08px;font-size:8.0px;line-height:8.0px;color:#6b6b6b;"><span style="font-size:8.2px;letter-spacing:-0.15px">5</span></div>
<div class="t " style="left:1137.00px;top:252.08px;font-size:8.0px;line-height:8.0px;color:#6b6b6b;"><span style="font-size:8.2px;letter-spacing:-0.15px">0</span></div>
<div class="t " style="left:1214.20px;top:252.08px;font-size:8.0px;line-height:8.0px;color:#6b6b6b;"><span style="font-size:8.2px;letter-spacing:-0.15px">1308.20</span></div>
<div class="t " style="left:1291.50px;top:252.08px;font-size:8.0px;line-height:8.0px;color:#6b6b6b;"><span style="font-size:8.2px;letter-spacing:-0.15px">7.67</span></div>
<div class="t " style="left:1368.20px;top:252.08px;font-size:8.0px;line-height:8.0px;color:#6b6b6b;"><span style="font-size:8.2px;letter-spacing:-0.15px">0</span></div>
<div class="ab" style="left:1443.20px;top:249.08px;width:21.6px;height:14px;background:#e41019;border-radius:1.5px;color:#fff;font-size:7.5px;line-height:15.8px;overflow:hidden;text-align:center;white-space:nowrap">自动</div>
<div class="ab" style="left:1471.20px;top:249.08px;width:21.6px;height:14px;background:#f05a24;border-radius:1.5px;color:#fff;font-size:7.5px;line-height:15.8px;overflow:hidden;text-align:center;white-space:nowrap">打针</div>
<div class="ab" style="left:1499.30px;top:249.08px;width:36.7px;height:14px;background:#2590e8;border-radius:1.5px;color:#fff;font-size:7.5px;line-height:15.8px;overflow:hidden;text-align:center;white-space:nowrap">设置连单</div>
<div class="ab" style="left:1542.60px;top:249.08px;width:21.5px;height:14px;background:#f05a24;border-radius:1.5px;color:#fff;font-size:7.5px;line-height:15.8px;overflow:hidden;text-align:center;white-space:nowrap">等级</div>
<div class="ab" style="left:163.5px;top:281.94px;width:12px;height:12px;border:1px solid #d9d9d9;border-radius:1px;background:#fff"></div>
<div class="t " style="left:192.20px;top:284.64px;font-size:8.0px;line-height:8.0px;color:#6b6b6b;"><span style="font-size:8.2px;letter-spacing:-0.15px">361</span></div>
<div class="t " style="left:243.60px;top:284.64px;font-size:8.0px;line-height:8.0px;color:#6b6b6b;"><span style="font-size:8.2px;letter-spacing:-0.15px">2023</span><span style="font-size:7.7px">年</span><span style="font-size:8.2px;letter-spacing:-0.15px">11</span><span style="font-size:7.7px">月</span><span style="font-size:8.2px;letter-spacing:-0.15px">07</span><span style="font-size:7.7px">日</span><span style="font-size:8.2px;letter-spacing:-0.15px"> 21:37:19</span></div>
<div class="ab" style="left:371.80px;top:281.44px;width:21.4px;height:14.5px;background:#2590e8;border-radius:1.5px;color:#fff;font-size:7.5px;line-height:16.5px;overflow:hidden;text-align:center">自动</div>
<div class="t " style="left:654.70px;top:284.64px;font-size:8.0px;line-height:8.0px;color:#6b6b6b;"><span style="font-size:8.2px;letter-spacing:-0.15px">0395873989</span></div>
<div class="t " style="left:731.40px;top:284.64px;font-size:8.0px;line-height:8.0px;color:#6b6b6b;"><span style="font-size:8.2px;letter-spacing:-0.15px">tuancris</span></div>
<div class="t " style="left:828.60px;top:284.64px;font-size:8.0px;line-height:8.0px;color:#6b6b6b;"><span style="font-size:8.2px;letter-spacing:-0.15px">VIP0</span></div>
<div class="t " style="left:879.50px;top:284.64px;font-size:8.0px;line-height:8.0px;color:#6b6b6b;"><span style="font-size:8.2px;letter-spacing:-0.15px">-</span></div>
<div class="t " style="left:982.30px;top:284.64px;font-size:8.0px;line-height:8.0px;color:#6b6b6b;"><span style="font-size:8.2px;letter-spacing:-0.15px">0</span></div>
<div class="t " style="left:1059.20px;top:284.64px;font-size:8.0px;line-height:8.0px;color:#6b6b6b;"><span style="font-size:8.2px;letter-spacing:-0.15px">0</span></div>
<div class="t " style="left:1137.00px;top:284.64px;font-size:8.0px;line-height:8.0px;color:#6b6b6b;"><span style="font-size:8.2px;letter-spacing:-0.15px">0</span></div>
<div class="t " style="left:1214.20px;top:284.64px;font-size:8.0px;line-height:8.0px;color:#6b6b6b;"><span style="font-size:8.2px;letter-spacing:-0.15px">0.00</span></div>
<div class="t " style="left:1291.50px;top:284.64px;font-size:8.0px;line-height:8.0px;color:#6b6b6b;"><span style="font-size:8.2px;letter-spacing:-0.15px">0</span></div>
<div class="t " style="left:1368.20px;top:284.64px;font-size:8.0px;line-height:8.0px;color:#6b6b6b;"><span style="font-size:8.2px;letter-spacing:-0.15px">0</span></div>
<div class="ab" style="left:1443.20px;top:281.64px;width:21.6px;height:14px;background:#e41019;border-radius:1.5px;color:#fff;font-size:7.5px;line-height:15.8px;overflow:hidden;text-align:center;white-space:nowrap">自动</div>
<div class="ab" style="left:1471.20px;top:281.64px;width:21.6px;height:14px;background:#f05a24;border-radius:1.5px;color:#fff;font-size:7.5px;line-height:15.8px;overflow:hidden;text-align:center;white-space:nowrap">打针</div>
<div class="ab" style="left:1499.30px;top:281.64px;width:36.7px;height:14px;background:#2590e8;border-radius:1.5px;color:#fff;font-size:7.5px;line-height:15.8px;overflow:hidden;text-align:center;white-space:nowrap">设置连单</div>
<div class="ab" style="left:1542.60px;top:281.64px;width:21.5px;height:14px;background:#f05a24;border-radius:1.5px;color:#fff;font-size:7.5px;line-height:15.8px;overflow:hidden;text-align:center;white-space:nowrap">等级</div>
<div class="ab" style="left:163.5px;top:314.50px;width:12px;height:12px;border:1px solid #d9d9d9;border-radius:1px;background:#fff"></div>
<div class="t " style="left:192.20px;top:317.20px;font-size:8.0px;line-height:8.0px;color:#6b6b6b;"><span style="font-size:8.2px;letter-spacing:-0.15px">360</span></div>
<div class="t " style="left:243.60px;top:317.20px;font-size:8.0px;line-height:8.0px;color:#6b6b6b;"><span style="font-size:8.2px;letter-spacing:-0.15px">2023</span><span style="font-size:7.7px">年</span><span style="font-size:8.2px;letter-spacing:-0.15px">11</span><span style="font-size:7.7px">月</span><span style="font-size:8.2px;letter-spacing:-0.15px">06</span><span style="font-size:7.7px">日</span><span style="font-size:8.2px;letter-spacing:-0.15px"> 19:58:21</span></div>
<div class="ab" style="left:371.80px;top:314.00px;width:21.4px;height:14.5px;background:#2590e8;border-radius:1.5px;color:#fff;font-size:7.5px;line-height:16.5px;overflow:hidden;text-align:center">自动</div>
<div class="t " style="left:654.70px;top:317.20px;font-size:8.0px;line-height:8.0px;color:#6b6b6b;"><span style="font-size:8.2px;letter-spacing:-0.15px">0966616416</span></div>
<div class="t " style="left:731.40px;top:317.20px;font-size:8.0px;line-height:8.0px;color:#6b6b6b;"><span style="font-size:8.2px;letter-spacing:-0.15px">Hungcacaaz</span></div>
<div class="t " style="left:828.60px;top:317.20px;font-size:8.0px;line-height:8.0px;color:#6b6b6b;"><span style="font-size:8.2px;letter-spacing:-0.15px">VIP0</span></div>
<div class="t " style="left:879.50px;top:317.20px;font-size:8.0px;line-height:8.0px;color:#6b6b6b;"><span style="font-size:8.2px;letter-spacing:-0.15px">-</span></div>
<div class="t " style="left:982.30px;top:317.20px;font-size:8.0px;line-height:8.0px;color:#6b6b6b;"><span style="font-size:8.2px;letter-spacing:-0.15px">0</span></div>
<div class="t " style="left:1059.20px;top:317.20px;font-size:8.0px;line-height:8.0px;color:#6b6b6b;"><span style="font-size:8.2px;letter-spacing:-0.15px">0</span></div>
<div class="t " style="left:1137.00px;top:317.20px;font-size:8.0px;line-height:8.0px;color:#6b6b6b;"><span style="font-size:8.2px;letter-spacing:-0.15px">0</span></div>
<div class="t " style="left:1214.20px;top:317.20px;font-size:8.0px;line-height:8.0px;color:#6b6b6b;"><span style="font-size:8.2px;letter-spacing:-0.15px">0.00</span></div>
<div class="t " style="left:1291.50px;top:317.20px;font-size:8.0px;line-height:8.0px;color:#6b6b6b;"><span style="font-size:8.2px;letter-spacing:-0.15px">0</span></div>
<div class="t " style="left:1368.20px;top:317.20px;font-size:8.0px;line-height:8.0px;color:#6b6b6b;"><span style="font-size:8.2px;letter-spacing:-0.15px">0</span></div>
<div class="ab" style="left:1443.20px;top:314.20px;width:21.6px;height:14px;background:#e41019;border-radius:1.5px;color:#fff;font-size:7.5px;line-height:15.8px;overflow:hidden;text-align:center;white-space:nowrap">自动</div>
<div class="ab" style="left:1471.20px;top:314.20px;width:21.6px;height:14px;background:#f05a24;border-radius:1.5px;color:#fff;font-size:7.5px;line-height:15.8px;overflow:hidden;text-align:center;white-space:nowrap">打针</div>
<div class="ab" style="left:1499.30px;top:314.20px;width:36.7px;height:14px;background:#2590e8;border-radius:1.5px;color:#fff;font-size:7.5px;line-height:15.8px;overflow:hidden;text-align:center;white-space:nowrap">设置连单</div>
<div class="ab" style="left:1542.60px;top:314.20px;width:21.5px;height:14px;background:#f05a24;border-radius:1.5px;color:#fff;font-size:7.5px;line-height:15.8px;overflow:hidden;text-align:center;white-space:nowrap">等级</div>
<div class="ab" style="left:163.5px;top:347.06px;width:12px;height:12px;border:1px solid #d9d9d9;border-radius:1px;background:#fff"></div>
<div class="t " style="left:192.20px;top:349.76px;font-size:8.0px;line-height:8.0px;color:#6b6b6b;"><span style="font-size:8.2px;letter-spacing:-0.15px">359</span></div>
<div class="t " style="left:243.60px;top:349.76px;font-size:8.0px;line-height:8.0px;color:#6b6b6b;"><span style="font-size:8.2px;letter-spacing:-0.15px">2023</span><span style="font-size:7.7px">年</span><span style="font-size:8.2px;letter-spacing:-0.15px">11</span><span style="font-size:7.7px">月</span><span style="font-size:8.2px;letter-spacing:-0.15px">04</span><span style="font-size:7.7px">日</span><span style="font-size:8.2px;letter-spacing:-0.15px"> 11:00:51</span></div>
<div class="ab" style="left:371.80px;top:346.56px;width:21.4px;height:14.5px;background:#2590e8;border-radius:1.5px;color:#fff;font-size:7.5px;line-height:16.5px;overflow:hidden;text-align:center">自动</div>
<div class="t " style="left:654.70px;top:349.76px;font-size:8.0px;line-height:8.0px;color:#6b6b6b;"><span style="font-size:8.2px;letter-spacing:-0.15px">0898668699</span></div>
<div class="t " style="left:731.40px;top:349.76px;font-size:8.0px;line-height:8.0px;color:#6b6b6b;"><span style="font-size:8.2px;letter-spacing:-0.15px">Phan van Hai</span></div>
<div class="t " style="left:828.60px;top:349.76px;font-size:8.0px;line-height:8.0px;color:#6b6b6b;"><span style="font-size:8.2px;letter-spacing:-0.15px">VIP0</span></div>
<div class="t " style="left:879.50px;top:349.76px;font-size:8.0px;line-height:8.0px;color:#6b6b6b;"><span style="font-size:8.2px;letter-spacing:-0.15px">-</span></div>
<div class="t " style="left:982.30px;top:349.76px;font-size:8.0px;line-height:8.0px;color:#6b6b6b;"><span style="font-size:8.2px;letter-spacing:-0.15px">0</span></div>
<div class="t " style="left:1059.20px;top:349.76px;font-size:8.0px;line-height:8.0px;color:#6b6b6b;"><span style="font-size:8.2px;letter-spacing:-0.15px">0</span></div>
<div class="t " style="left:1137.00px;top:349.76px;font-size:8.0px;line-height:8.0px;color:#6b6b6b;"><span style="font-size:8.2px;letter-spacing:-0.15px">0</span></div>
<div class="t " style="left:1214.20px;top:349.76px;font-size:8.0px;line-height:8.0px;color:#6b6b6b;"><span style="font-size:8.2px;letter-spacing:-0.15px">0.00</span></div>
<div class="t " style="left:1291.50px;top:349.76px;font-size:8.0px;line-height:8.0px;color:#6b6b6b;"><span style="font-size:8.2px;letter-spacing:-0.15px">0</span></div>
<div class="t " style="left:1368.20px;top:349.76px;font-size:8.0px;line-height:8.0px;color:#6b6b6b;"><span style="font-size:8.2px;letter-spacing:-0.15px">0</span></div>
<div class="ab" style="left:1443.20px;top:346.76px;width:21.6px;height:14px;background:#e41019;border-radius:1.5px;color:#fff;font-size:7.5px;line-height:15.8px;overflow:hidden;text-align:center;white-space:nowrap">自动</div>
<div class="ab" style="left:1471.20px;top:346.76px;width:21.6px;height:14px;background:#f05a24;border-radius:1.5px;color:#fff;font-size:7.5px;line-height:15.8px;overflow:hidden;text-align:center;white-space:nowrap">打针</div>
<div class="ab" style="left:1499.30px;top:346.76px;width:36.7px;height:14px;background:#2590e8;border-radius:1.5px;color:#fff;font-size:7.5px;line-height:15.8px;overflow:hidden;text-align:center;white-space:nowrap">设置连单</div>
<div class="ab" style="left:1542.60px;top:346.76px;width:21.5px;height:14px;background:#f05a24;border-radius:1.5px;color:#fff;font-size:7.5px;line-height:15.8px;overflow:hidden;text-align:center;white-space:nowrap">等级</div>
<div class="ab" style="left:163.5px;top:379.62px;width:12px;height:12px;border:1px solid #d9d9d9;border-radius:1px;background:#fff"></div>
<div class="t " style="left:192.20px;top:382.32px;font-size:8.0px;line-height:8.0px;color:#6b6b6b;"><span style="font-size:8.2px;letter-spacing:-0.15px">357</span></div>
<div class="t " style="left:243.60px;top:382.32px;font-size:8.0px;line-height:8.0px;color:#6b6b6b;"><span style="font-size:8.2px;letter-spacing:-0.15px">2023</span><span style="font-size:7.7px">年</span><span style="font-size:8.2px;letter-spacing:-0.15px">10</span><span style="font-size:7.7px">月</span><span style="font-size:8.2px;letter-spacing:-0.15px">30</span><span style="font-size:7.7px">日</span><span style="font-size:8.2px;letter-spacing:-0.15px"> 21:19:36</span></div>
<div class="ab" style="left:371.80px;top:379.12px;width:21.4px;height:14.5px;background:#2590e8;border-radius:1.5px;color:#fff;font-size:7.5px;line-height:16.5px;overflow:hidden;text-align:center">自动</div>
<div class="t " style="left:436.30px;top:382.32px;font-size:8.0px;line-height:8.0px;color:#6b6b6b;"><span style="font-size:8.2px;letter-spacing:-0.15px">1000.00</span></div>
<div class="t " style="left:654.70px;top:382.32px;font-size:8.0px;line-height:8.0px;color:#6b6b6b;"><span style="font-size:8.2px;letter-spacing:-0.15px">84776735555</span></div>
<div class="t " style="left:731.40px;top:382.32px;font-size:8.0px;line-height:8.0px;color:#6b6b6b;"><span style="font-size:8.2px;letter-spacing:-0.15px">ngothingochan</span></div>
<div class="t " style="left:828.60px;top:382.32px;font-size:8.0px;line-height:8.0px;color:#6b6b6b;"><span style="font-size:8.2px;letter-spacing:-0.15px">VIP2</span></div>
<div class="t " style="left:879.50px;top:382.32px;font-size:8.0px;line-height:8.0px;color:#6b6b6b;"><span style="font-size:8.2px;letter-spacing:-0.15px">-</span></div>
<div class="t " style="left:982.30px;top:382.32px;font-size:8.0px;line-height:8.0px;color:#6b6b6b;"><span style="font-size:8.2px;letter-spacing:-0.15px">46</span></div>
<div class="t " style="left:1059.20px;top:382.32px;font-size:8.0px;line-height:8.0px;color:#6b6b6b;"><span style="font-size:8.2px;letter-spacing:-0.15px">46</span></div>
<div class="t " style="left:1137.00px;top:382.32px;font-size:8.0px;line-height:8.0px;color:#6b6b6b;"><span style="font-size:8.2px;letter-spacing:-0.15px">0</span></div>
<div class="t " style="left:1214.20px;top:382.32px;font-size:8.0px;line-height:8.0px;color:#6b6b6b;"><span style="font-size:8.2px;letter-spacing:-0.15px">1000.65</span></div>
<div class="t " style="left:1291.50px;top:382.32px;font-size:8.0px;line-height:8.0px;color:#6b6b6b;"><span style="font-size:8.2px;letter-spacing:-0.15px">1144.65</span></div>
<div class="t " style="left:1368.20px;top:382.32px;font-size:8.0px;line-height:8.0px;color:#6b6b6b;"><span style="font-size:8.2px;letter-spacing:-0.15px">0</span></div>
<div class="ab" style="left:1443.20px;top:379.32px;width:21.6px;height:14px;background:#e41019;border-radius:1.5px;color:#fff;font-size:7.5px;line-height:15.8px;overflow:hidden;text-align:center;white-space:nowrap">自动</div>
<div class="ab" style="left:1471.20px;top:379.32px;width:21.6px;height:14px;background:#f05a24;border-radius:1.5px;color:#fff;font-size:7.5px;line-height:15.8px;overflow:hidden;text-align:center;white-space:nowrap">打针</div>
<div class="ab" style="left:1499.30px;top:379.32px;width:36.7px;height:14px;background:#2590e8;border-radius:1.5px;color:#fff;font-size:7.5px;line-height:15.8px;overflow:hidden;text-align:center;white-space:nowrap">设置连单</div>
<div class="ab" style="left:1542.60px;top:379.32px;width:21.5px;height:14px;background:#f05a24;border-radius:1.5px;color:#fff;font-size:7.5px;line-height:15.8px;overflow:hidden;text-align:center;white-space:nowrap">等级</div>
<div class="ab" style="left:163.5px;top:412.18px;width:12px;height:12px;border:1px solid #d9d9d9;border-radius:1px;background:#fff"></div>
<div class="t " style="left:192.20px;top:414.88px;font-size:8.0px;line-height:8.0px;color:#6b6b6b;"><span style="font-size:8.2px;letter-spacing:-0.15px">356</span></div>
<div class="t " style="left:243.60px;top:414.88px;font-size:8.0px;line-height:8.0px;color:#6b6b6b;"><span style="font-size:8.2px;letter-spacing:-0.15px">2023</span><span style="font-size:7.7px">年</span><span style="font-size:8.2px;letter-spacing:-0.15px">10</span><span style="font-size:7.7px">月</span><span style="font-size:8.2px;letter-spacing:-0.15px">30</span><span style="font-size:7.7px">日</span><span style="font-size:8.2px;letter-spacing:-0.15px"> 16:44:04</span></div>
<div class="ab" style="left:371.80px;top:411.68px;width:21.4px;height:14.5px;background:#2590e8;border-radius:1.5px;color:#fff;font-size:7.5px;line-height:16.5px;overflow:hidden;text-align:center">自动</div>
<div class="t " style="left:436.30px;top:414.88px;font-size:8.0px;line-height:8.0px;color:#6b6b6b;"><span style="font-size:8.2px;letter-spacing:-0.15px">1187.33</span></div>
<div class="t " style="left:654.70px;top:414.88px;font-size:8.0px;line-height:8.0px;color:#6b6b6b;"><span style="font-size:8.2px;letter-spacing:-0.15px">0776735555</span></div>
<div class="t " style="left:731.40px;top:414.88px;font-size:8.0px;line-height:8.0px;color:#6b6b6b;"><span style="font-size:8.2px;letter-spacing:-0.15px">Nguyenthingocc</span></div>
<div class="t " style="left:828.60px;top:414.88px;font-size:8.0px;line-height:8.0px;color:#6b6b6b;"><span style="font-size:8.2px;letter-spacing:-0.15px">VIP2</span></div>
<div class="t " style="left:879.50px;top:414.88px;font-size:8.0px;line-height:8.0px;color:#6b6b6b;"><span style="font-size:8.2px;letter-spacing:-0.15px">-</span></div>
<div class="t " style="left:982.30px;top:414.88px;font-size:8.0px;line-height:8.0px;color:#6b6b6b;"><span style="font-size:8.2px;letter-spacing:-0.15px">12</span></div>
<div class="t " style="left:1059.20px;top:414.88px;font-size:8.0px;line-height:8.0px;color:#6b6b6b;"><span style="font-size:8.2px;letter-spacing:-0.15px">12</span></div>
<div class="t " style="left:1137.00px;top:414.88px;font-size:8.0px;line-height:8.0px;color:#6b6b6b;"><span style="font-size:8.2px;letter-spacing:-0.15px">0</span></div>
<div class="t " style="left:1214.20px;top:414.88px;font-size:8.0px;line-height:8.0px;color:#6b6b6b;"><span style="font-size:8.2px;letter-spacing:-0.15px">1016.15</span></div>
<div class="t " style="left:1291.50px;top:414.88px;font-size:8.0px;line-height:8.0px;color:#6b6b6b;"><span style="font-size:8.2px;letter-spacing:-0.15px">1020.82</span></div>
<div class="t " style="left:1368.20px;top:414.88px;font-size:8.0px;line-height:8.0px;color:#6b6b6b;"><span style="font-size:8.2px;letter-spacing:-0.15px">0</span></div>
<div class="ab" style="left:1443.20px;top:411.88px;width:21.6px;height:14px;background:#e41019;border-radius:1.5px;color:#fff;font-size:7.5px;line-height:15.8px;overflow:hidden;text-align:center;white-space:nowrap">自动</div>
<div class="ab" style="left:1471.20px;top:411.88px;width:21.6px;height:14px;background:#f05a24;border-radius:1.5px;color:#fff;font-size:7.5px;line-height:15.8px;overflow:hidden;text-align:center;white-space:nowrap">打针</div>
<div class="ab" style="left:1499.30px;top:411.88px;width:36.7px;height:14px;background:#2590e8;border-radius:1.5px;color:#fff;font-size:7.5px;line-height:15.8px;overflow:hidden;text-align:center;white-space:nowrap">设置连单</div>
<div class="ab" style="left:1542.60px;top:411.88px;width:21.5px;height:14px;background:#f05a24;border-radius:1.5px;color:#fff;font-size:7.5px;line-height:15.8px;overflow:hidden;text-align:center;white-space:nowrap">等级</div>
<div class="ab" style="left:163.5px;top:444.74px;width:12px;height:12px;border:1px solid #d9d9d9;border-radius:1px;background:#fff"></div>
<div class="t " style="left:192.20px;top:447.44px;font-size:8.0px;line-height:8.0px;color:#6b6b6b;"><span style="font-size:8.2px;letter-spacing:-0.15px">355</span></div>
<div class="t " style="left:243.60px;top:447.44px;font-size:8.0px;line-height:8.0px;color:#6b6b6b;"><span style="font-size:8.2px;letter-spacing:-0.15px">2023</span><span style="font-size:7.7px">年</span><span style="font-size:8.2px;letter-spacing:-0.15px">10</span><span style="font-size:7.7px">月</span><span style="font-size:8.2px;letter-spacing:-0.15px">27</span><span style="font-size:7.7px">日</span><span style="font-size:8.2px;letter-spacing:-0.15px"> 22:19:50</span></div>
<div class="ab" style="left:371.80px;top:444.24px;width:21.4px;height:14.5px;background:#2590e8;border-radius:1.5px;color:#fff;font-size:7.5px;line-height:16.5px;overflow:hidden;text-align:center">自动</div>
<div class="t " style="left:654.70px;top:447.44px;font-size:8.0px;line-height:8.0px;color:#6b6b6b;"><span style="font-size:8.2px;letter-spacing:-0.15px">0822782678</span></div>
<div class="t " style="left:731.40px;top:447.44px;font-size:8.0px;line-height:8.0px;color:#6b6b6b;"><span style="font-size:8.2px;letter-spacing:-0.15px">ĐứcQuangMinh</span></div>
<div class="t " style="left:828.60px;top:447.44px;font-size:8.0px;line-height:8.0px;color:#6b6b6b;"><span style="font-size:8.2px;letter-spacing:-0.15px">VIP0</span></div>
<div class="t " style="left:879.50px;top:447.44px;font-size:8.0px;line-height:8.0px;color:#6b6b6b;"><span style="font-size:8.2px;letter-spacing:-0.15px">-</span></div>
<div class="t " style="left:982.30px;top:447.44px;font-size:8.0px;line-height:8.0px;color:#6b6b6b;"><span style="font-size:8.2px;letter-spacing:-0.15px">0</span></div>
<div class="t " style="left:1059.20px;top:447.44px;font-size:8.0px;line-height:8.0px;color:#6b6b6b;"><span style="font-size:8.2px;letter-spacing:-0.15px">0</span></div>
<div class="t " style="left:1137.00px;top:447.44px;font-size:8.0px;line-height:8.0px;color:#6b6b6b;"><span style="font-size:8.2px;letter-spacing:-0.15px">0</span></div>
<div class="t " style="left:1214.20px;top:447.44px;font-size:8.0px;line-height:8.0px;color:#6b6b6b;"><span style="font-size:8.2px;letter-spacing:-0.15px">0.00</span></div>
<div class="t " style="left:1291.50px;top:447.44px;font-size:8.0px;line-height:8.0px;color:#6b6b6b;"><span style="font-size:8.2px;letter-spacing:-0.15px">0</span></div>
<div class="t " style="left:1368.20px;top:447.44px;font-size:8.0px;line-height:8.0px;color:#6b6b6b;"><span style="font-size:8.2px;letter-spacing:-0.15px">0</span></div>
<div class="ab" style="left:1443.20px;top:444.44px;width:21.6px;height:14px;background:#e41019;border-radius:1.5px;color:#fff;font-size:7.5px;line-height:15.8px;overflow:hidden;text-align:center;white-space:nowrap">自动</div>
<div class="ab" style="left:1471.20px;top:444.44px;width:21.6px;height:14px;background:#f05a24;border-radius:1.5px;color:#fff;font-size:7.5px;line-height:15.8px;overflow:hidden;text-align:center;white-space:nowrap">打针</div>
<div class="ab" style="left:1499.30px;top:444.44px;width:36.7px;height:14px;background:#2590e8;border-radius:1.5px;color:#fff;font-size:7.5px;line-height:15.8px;overflow:hidden;text-align:center;white-space:nowrap">设置连单</div>
<div class="ab" style="left:1542.60px;top:444.44px;width:21.5px;height:14px;background:#f05a24;border-radius:1.5px;color:#fff;font-size:7.5px;line-height:15.8px;overflow:hidden;text-align:center;white-space:nowrap">等级</div>
<div class="ab" style="left:163.5px;top:477.30px;width:12px;height:12px;border:1px solid #d9d9d9;border-radius:1px;background:#fff"></div>
<div class="t " style="left:192.20px;top:480.00px;font-size:8.0px;line-height:8.0px;color:#6b6b6b;"><span style="font-size:8.2px;letter-spacing:-0.15px">354</span></div>
<div class="t " style="left:243.60px;top:480.00px;font-size:8.0px;line-height:8.0px;color:#6b6b6b;"><span style="font-size:8.2px;letter-spacing:-0.15px">2023</span><span style="font-size:7.7px">年</span><span style="font-size:8.2px;letter-spacing:-0.15px">10</span><span style="font-size:7.7px">月</span><span style="font-size:8.2px;letter-spacing:-0.15px">27</span><span style="font-size:7.7px">日</span><span style="font-size:8.2px;letter-spacing:-0.15px"> 15:36:27</span></div>
<div class="ab" style="left:371.80px;top:476.80px;width:21.4px;height:14.5px;background:#2590e8;border-radius:1.5px;color:#fff;font-size:7.5px;line-height:16.5px;overflow:hidden;text-align:center">自动</div>
<div class="t " style="left:654.70px;top:480.00px;font-size:8.0px;line-height:8.0px;color:#6b6b6b;"><span style="font-size:8.2px;letter-spacing:-0.15px">0979893392</span></div>
<div class="t " style="left:731.40px;top:480.00px;font-size:8.0px;line-height:8.0px;color:#6b6b6b;"><span style="font-size:8.2px;letter-spacing:-0.15px">Caotuattb</span></div>
<div class="t " style="left:828.60px;top:480.00px;font-size:8.0px;line-height:8.0px;color:#6b6b6b;"><span style="font-size:8.2px;letter-spacing:-0.15px">VIP0</span></div>
<div class="t " style="left:879.50px;top:480.00px;font-size:8.0px;line-height:8.0px;color:#6b6b6b;"><span style="font-size:8.2px;letter-spacing:-0.15px">-</span></div>
<div class="t " style="left:982.30px;top:480.00px;font-size:8.0px;line-height:8.0px;color:#6b6b6b;"><span style="font-size:8.2px;letter-spacing:-0.15px">0</span></div>
<div class="t " style="left:1059.20px;top:480.00px;font-size:8.0px;line-height:8.0px;color:#6b6b6b;"><span style="font-size:8.2px;letter-spacing:-0.15px">0</span></div>
<div class="t " style="left:1137.00px;top:480.00px;font-size:8.0px;line-height:8.0px;color:#6b6b6b;"><span style="font-size:8.2px;letter-spacing:-0.15px">0</span></div>
<div class="t " style="left:1214.20px;top:480.00px;font-size:8.0px;line-height:8.0px;color:#6b6b6b;"><span style="font-size:8.2px;letter-spacing:-0.15px">0.00</span></div>
<div class="t " style="left:1291.50px;top:480.00px;font-size:8.0px;line-height:8.0px;color:#6b6b6b;"><span style="font-size:8.2px;letter-spacing:-0.15px">0</span></div>
<div class="t " style="left:1368.20px;top:480.00px;font-size:8.0px;line-height:8.0px;color:#6b6b6b;"><span style="font-size:8.2px;letter-spacing:-0.15px">0</span></div>
<div class="ab" style="left:1443.20px;top:477.00px;width:21.6px;height:14px;background:#e41019;border-radius:1.5px;color:#fff;font-size:7.5px;line-height:15.8px;overflow:hidden;text-align:center;white-space:nowrap">自动</div>
<div class="ab" style="left:1471.20px;top:477.00px;width:21.6px;height:14px;background:#f05a24;border-radius:1.5px;color:#fff;font-size:7.5px;line-height:15.8px;overflow:hidden;text-align:center;white-space:nowrap">打针</div>
<div class="ab" style="left:1499.30px;top:477.00px;width:36.7px;height:14px;background:#2590e8;border-radius:1.5px;color:#fff;font-size:7.5px;line-height:15.8px;overflow:hidden;text-align:center;white-space:nowrap">设置连单</div>
<div class="ab" style="left:1542.60px;top:477.00px;width:21.5px;height:14px;background:#f05a24;border-radius:1.5px;color:#fff;font-size:7.5px;line-height:15.8px;overflow:hidden;text-align:center;white-space:nowrap">等级</div>
<div class="ab" style="left:163.5px;top:509.86px;width:12px;height:12px;border:1px solid #d9d9d9;border-radius:1px;background:#fff"></div>
<div class="t " style="left:192.20px;top:512.56px;font-size:8.0px;line-height:8.0px;color:#6b6b6b;"><span style="font-size:8.2px;letter-spacing:-0.15px">353</span></div>
<div class="t " style="left:243.60px;top:512.56px;font-size:8.0px;line-height:8.0px;color:#6b6b6b;"><span style="font-size:8.2px;letter-spacing:-0.15px">2023</span><span style="font-size:7.7px">年</span><span style="font-size:8.2px;letter-spacing:-0.15px">10</span><span style="font-size:7.7px">月</span><span style="font-size:8.2px;letter-spacing:-0.15px">24</span><span style="font-size:7.7px">日</span><span style="font-size:8.2px;letter-spacing:-0.15px"> 20:22:28</span></div>
<div class="ab" style="left:371.80px;top:509.36px;width:21.4px;height:14.5px;background:#2590e8;border-radius:1.5px;color:#fff;font-size:7.5px;line-height:16.5px;overflow:hidden;text-align:center">自动</div>
<div class="t " style="left:436.30px;top:512.56px;font-size:8.0px;line-height:8.0px;color:#6b6b6b;"><span style="font-size:8.2px;letter-spacing:-0.15px">1000.00</span></div>
<div class="t " style="left:654.70px;top:512.56px;font-size:8.0px;line-height:8.0px;color:#6b6b6b;"><span style="font-size:8.2px;letter-spacing:-0.15px">9999999999</span></div>
<div class="t " style="left:731.40px;top:512.56px;font-size:8.0px;line-height:8.0px;color:#6b6b6b;"><span style="font-size:7.7px">赵龙</span></div>
<div class="t " style="left:828.60px;top:512.56px;font-size:8.0px;line-height:8.0px;color:#6b6b6b;"><span style="font-size:8.2px;letter-spacing:-0.15px">VIP1</span></div>
<div class="t " style="left:879.50px;top:512.56px;font-size:8.0px;line-height:8.0px;color:#6b6b6b;"><span style="font-size:8.2px;letter-spacing:-0.15px">-</span></div>
<div class="t " style="left:982.30px;top:512.56px;font-size:8.0px;line-height:8.0px;color:#6b6b6b;"><span style="font-size:8.2px;letter-spacing:-0.15px">0</span></div>
<div class="t " style="left:1059.20px;top:512.56px;font-size:8.0px;line-height:8.0px;color:#6b6b6b;"><span style="font-size:8.2px;letter-spacing:-0.15px">0</span></div>
<div class="t " style="left:1137.00px;top:512.56px;font-size:8.0px;line-height:8.0px;color:#6b6b6b;"><span style="font-size:8.2px;letter-spacing:-0.15px">0</span></div>
<div class="t " style="left:1214.20px;top:512.56px;font-size:8.0px;line-height:8.0px;color:#6b6b6b;"><span style="font-size:8.2px;letter-spacing:-0.15px">1000.00</span></div>
<div class="t " style="left:1291.50px;top:512.56px;font-size:8.0px;line-height:8.0px;color:#6b6b6b;"><span style="font-size:8.2px;letter-spacing:-0.15px">0</span></div>
<div class="t " style="left:1368.20px;top:512.56px;font-size:8.0px;line-height:8.0px;color:#6b6b6b;"><span style="font-size:8.2px;letter-spacing:-0.15px">0</span></div>
<div class="ab" style="left:1443.20px;top:509.56px;width:21.6px;height:14px;background:#e41019;border-radius:1.5px;color:#fff;font-size:7.5px;line-height:15.8px;overflow:hidden;text-align:center;white-space:nowrap">自动</div>
<div class="ab" style="left:1471.20px;top:509.56px;width:21.6px;height:14px;background:#f05a24;border-radius:1.5px;color:#fff;font-size:7.5px;line-height:15.8px;overflow:hidden;text-align:center;white-space:nowrap">打针</div>
<div class="ab" style="left:1499.30px;top:509.56px;width:36.7px;height:14px;background:#2590e8;border-radius:1.5px;color:#fff;font-size:7.5px;line-height:15.8px;overflow:hidden;text-align:center;white-space:nowrap">设置连单</div>
<div class="ab" style="left:1542.60px;top:509.56px;width:21.5px;height:14px;background:#f05a24;border-radius:1.5px;color:#fff;font-size:7.5px;line-height:15.8px;overflow:hidden;text-align:center;white-space:nowrap">等级</div>
<div class="ab" style="left:163.5px;top:542.42px;width:12px;height:12px;border:1px solid #d9d9d9;border-radius:1px;background:#fff"></div>
<div class="t " style="left:192.20px;top:545.12px;font-size:8.0px;line-height:8.0px;color:#6b6b6b;"><span style="font-size:8.2px;letter-spacing:-0.15px">352</span></div>
<div class="t " style="left:243.60px;top:545.12px;font-size:8.0px;line-height:8.0px;color:#6b6b6b;"><span style="font-size:8.2px;letter-spacing:-0.15px">2023</span><span style="font-size:7.7px">年</span><span style="font-size:8.2px;letter-spacing:-0.15px">10</span><span style="font-size:7.7px">月</span><span style="font-size:8.2px;letter-spacing:-0.15px">24</span><span style="font-size:7.7px">日</span><span style="font-size:8.2px;letter-spacing:-0.15px"> 20:20:22</span></div>
<div class="ab" style="left:371.80px;top:541.92px;width:21.4px;height:14.5px;background:#2590e8;border-radius:1.5px;color:#fff;font-size:7.5px;line-height:16.5px;overflow:hidden;text-align:center">自动</div>
<div class="t " style="left:436.30px;top:545.12px;font-size:8.0px;line-height:8.0px;color:#6b6b6b;"><span style="font-size:8.2px;letter-spacing:-0.15px">204.00</span></div>
<div class="t " style="left:654.70px;top:545.12px;font-size:8.0px;line-height:8.0px;color:#6b6b6b;"><span style="font-size:8.2px;letter-spacing:-0.15px">0963788678</span></div>
<div class="t " style="left:731.40px;top:545.12px;font-size:8.0px;line-height:8.0px;color:#6b6b6b;"><span style="font-size:7.7px">啊成</span></div>
<div class="t " style="left:828.60px;top:545.12px;font-size:8.0px;line-height:8.0px;color:#6b6b6b;"><span style="font-size:8.2px;letter-spacing:-0.15px">VIP5</span></div>
<div class="t " style="left:879.50px;top:545.12px;font-size:8.0px;line-height:8.0px;color:#6b6b6b;"><span style="font-size:8.2px;letter-spacing:-0.15px">-</span></div>
<div class="t " style="left:982.30px;top:545.12px;font-size:8.0px;line-height:8.0px;color:#6b6b6b;"><span style="font-size:8.2px;letter-spacing:-0.15px">0</span></div>
<div class="t " style="left:1059.20px;top:545.12px;font-size:8.0px;line-height:8.0px;color:#6b6b6b;"><span style="font-size:8.2px;letter-spacing:-0.15px">0</span></div>
<div class="t " style="left:1137.00px;top:545.12px;font-size:8.0px;line-height:8.0px;color:#6b6b6b;"><span style="font-size:8.2px;letter-spacing:-0.15px">0</span></div>
<div class="t " style="left:1214.20px;top:545.12px;font-size:8.0px;line-height:8.0px;color:#6b6b6b;"><span style="font-size:8.2px;letter-spacing:-0.15px">221.52</span></div>
<div class="t " style="left:1291.50px;top:545.12px;font-size:8.0px;line-height:8.0px;color:#6b6b6b;"><span style="font-size:8.2px;letter-spacing:-0.15px">0</span></div>
<div class="t " style="left:1368.20px;top:545.12px;font-size:8.0px;line-height:8.0px;color:#6b6b6b;"><span style="font-size:8.2px;letter-spacing:-0.15px">17.52</span></div>
<div class="ab" style="left:1443.20px;top:542.12px;width:21.6px;height:14px;background:#e41019;border-radius:1.5px;color:#fff;font-size:7.5px;line-height:15.8px;overflow:hidden;text-align:center;white-space:nowrap">自动</div>
<div class="ab" style="left:1471.20px;top:542.12px;width:21.6px;height:14px;background:#f05a24;border-radius:1.5px;color:#fff;font-size:7.5px;line-height:15.8px;overflow:hidden;text-align:center;white-space:nowrap">打针</div>
<div class="ab" style="left:1499.30px;top:542.12px;width:36.7px;height:14px;background:#2590e8;border-radius:1.5px;color:#fff;font-size:7.5px;line-height:15.8px;overflow:hidden;text-align:center;white-space:nowrap">设置连单</div>
<div class="ab" style="left:1542.60px;top:542.12px;width:21.5px;height:14px;background:#f05a24;border-radius:1.5px;color:#fff;font-size:7.5px;line-height:15.8px;overflow:hidden;text-align:center;white-space:nowrap">等级</div>
<div class="ab" style="left:163.5px;top:574.98px;width:12px;height:12px;border:1px solid #d9d9d9;border-radius:1px;background:#fff"></div>
<div class="t " style="left:192.20px;top:577.68px;font-size:8.0px;line-height:8.0px;color:#6b6b6b;"><span style="font-size:8.2px;letter-spacing:-0.15px">351</span></div>
<div class="t " style="left:243.60px;top:577.68px;font-size:8.0px;line-height:8.0px;color:#6b6b6b;"><span style="font-size:8.2px;letter-spacing:-0.15px">2023</span><span style="font-size:7.7px">年</span><span style="font-size:8.2px;letter-spacing:-0.15px">10</span><span style="font-size:7.7px">月</span><span style="font-size:8.2px;letter-spacing:-0.15px">24</span><span style="font-size:7.7px">日</span><span style="font-size:8.2px;letter-spacing:-0.15px"> 20:18:39</span></div>
<div class="ab" style="left:371.80px;top:574.48px;width:21.4px;height:14.5px;background:#2590e8;border-radius:1.5px;color:#fff;font-size:7.5px;line-height:16.5px;overflow:hidden;text-align:center">自动</div>
<div class="t " style="left:436.30px;top:577.68px;font-size:8.0px;line-height:8.0px;color:#6b6b6b;"><span style="font-size:8.2px;letter-spacing:-0.15px">1445.00</span></div>
<div class="t " style="left:654.70px;top:577.68px;font-size:8.0px;line-height:8.0px;color:#6b6b6b;"><span style="font-size:8.2px;letter-spacing:-0.15px">0123456789</span></div>
<div class="t " style="left:731.40px;top:577.68px;font-size:8.0px;line-height:8.0px;color:#6b6b6b;"><span style="font-size:7.7px">小鸡</span></div>
<div class="t " style="left:828.60px;top:577.68px;font-size:8.0px;line-height:8.0px;color:#6b6b6b;"><span style="font-size:8.2px;letter-spacing:-0.15px">VIP3</span></div>
<div class="t " style="left:879.50px;top:577.68px;font-size:8.0px;line-height:8.0px;color:#6b6b6b;"><span style="font-size:8.2px;letter-spacing:-0.15px">-</span></div>
<div class="t " style="left:982.30px;top:577.68px;font-size:8.0px;line-height:8.0px;color:#6b6b6b;"><span style="font-size:8.2px;letter-spacing:-0.15px">0</span></div>
<div class="t " style="left:1059.20px;top:577.68px;font-size:8.0px;line-height:8.0px;color:#6b6b6b;"><span style="font-size:8.2px;letter-spacing:-0.15px">0</span></div>
<div class="t " style="left:1137.00px;top:577.68px;font-size:8.0px;line-height:8.0px;color:#6b6b6b;"><span style="font-size:8.2px;letter-spacing:-0.15px">0</span></div>
<div class="t " style="left:1214.20px;top:577.68px;font-size:8.0px;line-height:8.0px;color:#6b6b6b;"><span style="font-size:8.2px;letter-spacing:-0.15px">0.00</span></div>
<div class="t " style="left:1291.50px;top:577.68px;font-size:8.0px;line-height:8.0px;color:#6b6b6b;"><span style="font-size:8.2px;letter-spacing:-0.15px">0</span></div>
<div class="t " style="left:1368.20px;top:577.68px;font-size:8.0px;line-height:8.0px;color:#6b6b6b;"><span style="font-size:8.2px;letter-spacing:-0.15px">0</span></div>
<div class="ab" style="left:1443.20px;top:574.68px;width:21.6px;height:14px;background:#e41019;border-radius:1.5px;color:#fff;font-size:7.5px;line-height:15.8px;overflow:hidden;text-align:center;white-space:nowrap">自动</div>
<div class="ab" style="left:1471.20px;top:574.68px;width:21.6px;height:14px;background:#f05a24;border-radius:1.5px;color:#fff;font-size:7.5px;line-height:15.8px;overflow:hidden;text-align:center;white-space:nowrap">打针</div>
<div class="ab" style="left:1499.30px;top:574.68px;width:36.7px;height:14px;background:#2590e8;border-radius:1.5px;color:#fff;font-size:7.5px;line-height:15.8px;overflow:hidden;text-align:center;white-space:nowrap">设置连单</div>
<div class="ab" style="left:1542.60px;top:574.68px;width:21.5px;height:14px;background:#f05a24;border-radius:1.5px;color:#fff;font-size:7.5px;line-height:15.8px;overflow:hidden;text-align:center;white-space:nowrap">等级</div>
<div class="ab" style="left:163.5px;top:607.54px;width:12px;height:12px;border:1px solid #d9d9d9;border-radius:1px;background:#fff"></div>
<div class="t " style="left:192.20px;top:610.24px;font-size:8.0px;line-height:8.0px;color:#6b6b6b;"><span style="font-size:8.2px;letter-spacing:-0.15px">350</span></div>
<div class="t " style="left:243.60px;top:610.24px;font-size:8.0px;line-height:8.0px;color:#6b6b6b;"><span style="font-size:8.2px;letter-spacing:-0.15px">2023</span><span style="font-size:7.7px">年</span><span style="font-size:8.2px;letter-spacing:-0.15px">10</span><span style="font-size:7.7px">月</span><span style="font-size:8.2px;letter-spacing:-0.15px">24</span><span style="font-size:7.7px">日</span><span style="font-size:8.2px;letter-spacing:-0.15px"> 20:17:32</span></div>
<div class="ab" style="left:371.80px;top:607.04px;width:21.4px;height:14.5px;background:#2590e8;border-radius:1.5px;color:#fff;font-size:7.5px;line-height:16.5px;overflow:hidden;text-align:center">自动</div>
<div class="t " style="left:436.30px;top:610.24px;font-size:8.0px;line-height:8.0px;color:#6b6b6b;"><span style="font-size:8.2px;letter-spacing:-0.15px">1545.00</span></div>
<div class="t " style="left:654.70px;top:610.24px;font-size:8.0px;line-height:8.0px;color:#6b6b6b;"><span style="font-size:8.2px;letter-spacing:-0.15px">0775583396</span></div>
<div class="t " style="left:731.40px;top:610.24px;font-size:8.0px;line-height:8.0px;color:#6b6b6b;"><span style="font-size:7.7px">阿勇</span></div>
<div class="t " style="left:828.60px;top:610.24px;font-size:8.0px;line-height:8.0px;color:#6b6b6b;"><span style="font-size:8.2px;letter-spacing:-0.15px">VIP3</span></div>
<div class="t " style="left:879.50px;top:610.24px;font-size:8.0px;line-height:8.0px;color:#6b6b6b;"><span style="font-size:8.2px;letter-spacing:-0.15px">-</span></div>
<div class="t " style="left:982.30px;top:610.24px;font-size:8.0px;line-height:8.0px;color:#6b6b6b;"><span style="font-size:8.2px;letter-spacing:-0.15px">0</span></div>
<div class="t " style="left:1059.20px;top:610.24px;font-size:8.0px;line-height:8.0px;color:#6b6b6b;"><span style="font-size:8.2px;letter-spacing:-0.15px">0</span></div>
<div class="t " style="left:1137.00px;top:610.24px;font-size:8.0px;line-height:8.0px;color:#6b6b6b;"><span style="font-size:8.2px;letter-spacing:-0.15px">0</span></div>
<div class="t " style="left:1214.20px;top:610.24px;font-size:8.0px;line-height:8.0px;color:#6b6b6b;"><span style="font-size:8.2px;letter-spacing:-0.15px">1545.00</span></div>
<div class="t " style="left:1291.50px;top:610.24px;font-size:8.0px;line-height:8.0px;color:#6b6b6b;"><span style="font-size:8.2px;letter-spacing:-0.15px">0</span></div>
<div class="t " style="left:1368.20px;top:610.24px;font-size:8.0px;line-height:8.0px;color:#6b6b6b;"><span style="font-size:8.2px;letter-spacing:-0.15px">0</span></div>
<div class="ab" style="left:1443.20px;top:607.24px;width:21.6px;height:14px;background:#e41019;border-radius:1.5px;color:#fff;font-size:7.5px;line-height:15.8px;overflow:hidden;text-align:center;white-space:nowrap">自动</div>
<div class="ab" style="left:1471.20px;top:607.24px;width:21.6px;height:14px;background:#f05a24;border-radius:1.5px;color:#fff;font-size:7.5px;line-height:15.8px;overflow:hidden;text-align:center;white-space:nowrap">打针</div>
<div class="ab" style="left:1499.30px;top:607.24px;width:36.7px;height:14px;background:#2590e8;border-radius:1.5px;color:#fff;font-size:7.5px;line-height:15.8px;overflow:hidden;text-align:center;white-space:nowrap">设置连单</div>
<div class="ab" style="left:1542.60px;top:607.24px;width:21.5px;height:14px;background:#f05a24;border-radius:1.5px;color:#fff;font-size:7.5px;line-height:15.8px;overflow:hidden;text-align:center;white-space:nowrap">等级</div>
<div class="ab" style="left:163.5px;top:640.10px;width:12px;height:12px;border:1px solid #d9d9d9;border-radius:1px;background:#fff"></div>
<div class="t " style="left:192.20px;top:642.80px;font-size:8.0px;line-height:8.0px;color:#6b6b6b;"><span style="font-size:8.2px;letter-spacing:-0.15px">348</span></div>
<div class="t " style="left:243.60px;top:642.80px;font-size:8.0px;line-height:8.0px;color:#6b6b6b;"><span style="font-size:8.2px;letter-spacing:-0.15px">2023</span><span style="font-size:7.7px">年</span><span style="font-size:8.2px;letter-spacing:-0.15px">10</span><span style="font-size:7.7px">月</span><span style="font-size:8.2px;letter-spacing:-0.15px">24</span><span style="font-size:7.7px">日</span><span style="font-size:8.2px;letter-spacing:-0.15px"> 20:15:26</span></div>
<div class="ab" style="left:371.80px;top:639.60px;width:21.4px;height:14.5px;background:#2590e8;border-radius:1.5px;color:#fff;font-size:7.5px;line-height:16.5px;overflow:hidden;text-align:center">自动</div>
<div class="t " style="left:436.30px;top:642.80px;font-size:8.0px;line-height:8.0px;color:#6b6b6b;"><span style="font-size:8.2px;letter-spacing:-0.15px">44545.00</span></div>
<div class="t " style="left:654.70px;top:642.80px;font-size:8.0px;line-height:8.0px;color:#6b6b6b;"><span style="font-size:8.2px;letter-spacing:-0.15px">0988888339</span></div>
<div class="t " style="left:731.40px;top:642.80px;font-size:8.0px;line-height:8.0px;color:#6b6b6b;"><span style="font-size:7.7px">安安</span></div>
<div class="t " style="left:828.60px;top:642.80px;font-size:8.0px;line-height:8.0px;color:#6b6b6b;"><span style="font-size:8.2px;letter-spacing:-0.15px">VIP5</span></div>
<div class="t " style="left:879.50px;top:642.80px;font-size:8.0px;line-height:8.0px;color:#6b6b6b;"><span style="font-size:8.2px;letter-spacing:-0.15px">-</span></div>
<div class="t " style="left:982.30px;top:642.80px;font-size:8.0px;line-height:8.0px;color:#6b6b6b;"><span style="font-size:8.2px;letter-spacing:-0.15px">0</span></div>
<div class="t " style="left:1059.20px;top:642.80px;font-size:8.0px;line-height:8.0px;color:#6b6b6b;"><span style="font-size:8.2px;letter-spacing:-0.15px">0</span></div>
<div class="t " style="left:1137.00px;top:642.80px;font-size:8.0px;line-height:8.0px;color:#6b6b6b;"><span style="font-size:8.2px;letter-spacing:-0.15px">0</span></div>
<div class="t " style="left:1214.20px;top:642.80px;font-size:8.0px;line-height:8.0px;color:#6b6b6b;"><span style="font-size:8.2px;letter-spacing:-0.15px">44545.00</span></div>
<div class="t " style="left:1291.50px;top:642.80px;font-size:8.0px;line-height:8.0px;color:#6b6b6b;"><span style="font-size:8.2px;letter-spacing:-0.15px">0</span></div>
<div class="t " style="left:1368.20px;top:642.80px;font-size:8.0px;line-height:8.0px;color:#6b6b6b;"><span style="font-size:8.2px;letter-spacing:-0.15px">0</span></div>
<div class="ab" style="left:1443.20px;top:639.80px;width:21.6px;height:14px;background:#e41019;border-radius:1.5px;color:#fff;font-size:7.5px;line-height:15.8px;overflow:hidden;text-align:center;white-space:nowrap">自动</div>
<div class="ab" style="left:1471.20px;top:639.80px;width:21.6px;height:14px;background:#f05a24;border-radius:1.5px;color:#fff;font-size:7.5px;line-height:15.8px;overflow:hidden;text-align:center;white-space:nowrap">打针</div>
<div class="ab" style="left:1499.30px;top:639.80px;width:36.7px;height:14px;background:#2590e8;border-radius:1.5px;color:#fff;font-size:7.5px;line-height:15.8px;overflow:hidden;text-align:center;white-space:nowrap">设置连单</div>
<div class="ab" style="left:1542.60px;top:639.80px;width:21.5px;height:14px;background:#f05a24;border-radius:1.5px;color:#fff;font-size:7.5px;line-height:15.8px;overflow:hidden;text-align:center;white-space:nowrap">等级</div>
<div class="ab" style="left:163.5px;top:672.66px;width:12px;height:12px;border:1px solid #d9d9d9;border-radius:1px;background:#fff"></div>
<div class="t " style="left:192.20px;top:675.36px;font-size:8.0px;line-height:8.0px;color:#6b6b6b;"><span style="font-size:8.2px;letter-spacing:-0.15px">347</span></div>
<div class="t " style="left:243.60px;top:675.36px;font-size:8.0px;line-height:8.0px;color:#6b6b6b;"><span style="font-size:8.2px;letter-spacing:-0.15px">2023</span><span style="font-size:7.7px">年</span><span style="font-size:8.2px;letter-spacing:-0.15px">10</span><span style="font-size:7.7px">月</span><span style="font-size:8.2px;letter-spacing:-0.15px">24</span><span style="font-size:7.7px">日</span><span style="font-size:8.2px;letter-spacing:-0.15px"> 12:33:11</span></div>
<div class="ab" style="left:371.80px;top:672.16px;width:21.4px;height:14.5px;background:#2590e8;border-radius:1.5px;color:#fff;font-size:7.5px;line-height:16.5px;overflow:hidden;text-align:center">自动</div>
<div class="t " style="left:436.30px;top:675.36px;font-size:8.0px;line-height:8.0px;color:#6b6b6b;"><span style="font-size:8.2px;letter-spacing:-0.15px">1000.00</span></div>
<div class="t " style="left:654.70px;top:675.36px;font-size:8.0px;line-height:8.0px;color:#6b6b6b;"><span style="font-size:8.2px;letter-spacing:-0.15px">0852411313</span></div>
<div class="t " style="left:731.40px;top:675.36px;font-size:8.0px;line-height:8.0px;color:#6b6b6b;"><span style="font-size:8.2px;letter-spacing:-0.15px">ngocuyen</span></div>
<div class="t " style="left:828.60px;top:675.36px;font-size:8.0px;line-height:8.0px;color:#6b6b6b;"><span style="font-size:8.2px;letter-spacing:-0.15px">VIP2</span></div>
<div class="t " style="left:879.50px;top:675.36px;font-size:8.0px;line-height:8.0px;color:#6b6b6b;"><span style="font-size:8.2px;letter-spacing:-0.15px">-</span></div>
<div class="t " style="left:982.30px;top:675.36px;font-size:8.0px;line-height:8.0px;color:#6b6b6b;"><span style="font-size:8.2px;letter-spacing:-0.15px">241</span></div>
<div class="t " style="left:1059.20px;top:675.36px;font-size:8.0px;line-height:8.0px;color:#6b6b6b;"><span style="font-size:8.2px;letter-spacing:-0.15px">241</span></div>
<div class="t " style="left:1137.00px;top:675.36px;font-size:8.0px;line-height:8.0px;color:#6b6b6b;"><span style="font-size:8.2px;letter-spacing:-0.15px">0</span></div>
<div class="t " style="left:1214.20px;top:675.36px;font-size:8.0px;line-height:8.0px;color:#6b6b6b;"><span style="font-size:8.2px;letter-spacing:-0.15px">1000.65</span></div>
<div class="t " style="left:1291.50px;top:675.36px;font-size:8.0px;line-height:8.0px;color:#6b6b6b;"><span style="font-size:8.2px;letter-spacing:-0.15px">681.65</span></div>
<div class="t " style="left:1368.20px;top:675.36px;font-size:8.0px;line-height:8.0px;color:#6b6b6b;"><span style="font-size:8.2px;letter-spacing:-0.15px">0</span></div>
<div class="ab" style="left:1443.20px;top:672.36px;width:21.6px;height:14px;background:#e41019;border-radius:1.5px;color:#fff;font-size:7.5px;line-height:15.8px;overflow:hidden;text-align:center;white-space:nowrap">自动</div>
<div class="ab" style="left:1471.20px;top:672.36px;width:21.6px;height:14px;background:#f05a24;border-radius:1.5px;color:#fff;font-size:7.5px;line-height:15.8px;overflow:hidden;text-align:center;white-space:nowrap">打针</div>
<div class="ab" style="left:1499.30px;top:672.36px;width:36.7px;height:14px;background:#2590e8;border-radius:1.5px;color:#fff;font-size:7.5px;line-height:15.8px;overflow:hidden;text-align:center;white-space:nowrap">设置连单</div>
<div class="ab" style="left:1542.60px;top:672.36px;width:21.5px;height:14px;background:#f05a24;border-radius:1.5px;color:#fff;font-size:7.5px;line-height:15.8px;overflow:hidden;text-align:center;white-space:nowrap">等级</div>
<div class="ab" style="left:163.5px;top:705.22px;width:12px;height:12px;border:1px solid #d9d9d9;border-radius:1px;background:#fff"></div>
<div class="t " style="left:192.20px;top:707.92px;font-size:8.0px;line-height:8.0px;color:#6b6b6b;"><span style="font-size:8.2px;letter-spacing:-0.15px">346</span></div>
<div class="t " style="left:243.60px;top:707.92px;font-size:8.0px;line-height:8.0px;color:#6b6b6b;"><span style="font-size:8.2px;letter-spacing:-0.15px">2023</span><span style="font-size:7.7px">年</span><span style="font-size:8.2px;letter-spacing:-0.15px">10</span><span style="font-size:7.7px">月</span><span style="font-size:8.2px;letter-spacing:-0.15px">24</span><span style="font-size:7.7px">日</span><span style="font-size:8.2px;letter-spacing:-0.15px"> 10:39:56</span></div>
<div class="ab" style="left:371.80px;top:704.72px;width:21.4px;height:14.5px;background:#2590e8;border-radius:1.5px;color:#fff;font-size:7.5px;line-height:16.5px;overflow:hidden;text-align:center">自动</div>
<div class="t " style="left:654.70px;top:707.92px;font-size:8.0px;line-height:8.0px;color:#6b6b6b;"><span style="font-size:8.2px;letter-spacing:-0.15px">0877599452</span></div>
<div class="t " style="left:731.40px;top:707.92px;font-size:8.0px;line-height:8.0px;color:#6b6b6b;"><span style="font-size:8.2px;letter-spacing:-0.15px">Dang mai</span></div>
<div class="t " style="left:828.60px;top:707.92px;font-size:8.0px;line-height:8.0px;color:#6b6b6b;"><span style="font-size:8.2px;letter-spacing:-0.15px">VIP0</span></div>
<div class="t " style="left:879.50px;top:707.92px;font-size:8.0px;line-height:8.0px;color:#6b6b6b;"><span style="font-size:8.2px;letter-spacing:-0.15px">-</span></div>
<div class="t " style="left:982.30px;top:707.92px;font-size:8.0px;line-height:8.0px;color:#6b6b6b;"><span style="font-size:8.2px;letter-spacing:-0.15px">0</span></div>
<div class="t " style="left:1059.20px;top:707.92px;font-size:8.0px;line-height:8.0px;color:#6b6b6b;"><span style="font-size:8.2px;letter-spacing:-0.15px">0</span></div>
<div class="t " style="left:1137.00px;top:707.92px;font-size:8.0px;line-height:8.0px;color:#6b6b6b;"><span style="font-size:8.2px;letter-spacing:-0.15px">0</span></div>
<div class="t " style="left:1214.20px;top:707.92px;font-size:8.0px;line-height:8.0px;color:#6b6b6b;"><span style="font-size:8.2px;letter-spacing:-0.15px">0.00</span></div>
<div class="t " style="left:1291.50px;top:707.92px;font-size:8.0px;line-height:8.0px;color:#6b6b6b;"><span style="font-size:8.2px;letter-spacing:-0.15px">0</span></div>
<div class="t " style="left:1368.20px;top:707.92px;font-size:8.0px;line-height:8.0px;color:#6b6b6b;"><span style="font-size:8.2px;letter-spacing:-0.15px">0</span></div>
<div class="ab" style="left:1443.20px;top:704.92px;width:21.6px;height:14px;background:#e41019;border-radius:1.5px;color:#fff;font-size:7.5px;line-height:15.8px;overflow:hidden;text-align:center;white-space:nowrap">自动</div>
<div class="ab" style="left:1471.20px;top:704.92px;width:21.6px;height:14px;background:#f05a24;border-radius:1.5px;color:#fff;font-size:7.5px;line-height:15.8px;overflow:hidden;text-align:center;white-space:nowrap">打针</div>
<div class="ab" style="left:1499.30px;top:704.92px;width:36.7px;height:14px;background:#2590e8;border-radius:1.5px;color:#fff;font-size:7.5px;line-height:15.8px;overflow:hidden;text-align:center;white-space:nowrap">设置连单</div>
<div class="ab" style="left:1542.60px;top:704.92px;width:21.5px;height:14px;background:#f05a24;border-radius:1.5px;color:#fff;font-size:7.5px;line-height:15.8px;overflow:hidden;text-align:center;white-space:nowrap">等级</div>
<div class="ab" style="left:163.5px;top:737.78px;width:12px;height:12px;border:1px solid #d9d9d9;border-radius:1px;background:#fff"></div>
<div class="t " style="left:192.20px;top:740.48px;font-size:8.0px;line-height:8.0px;color:#6b6b6b;"><span style="font-size:8.2px;letter-spacing:-0.15px">345</span></div>
<div class="t " style="left:243.60px;top:740.48px;font-size:8.0px;line-height:8.0px;color:#6b6b6b;"><span style="font-size:8.2px;letter-spacing:-0.15px">2023</span><span style="font-size:7.7px">年</span><span style="font-size:8.2px;letter-spacing:-0.15px">10</span><span style="font-size:7.7px">月</span><span style="font-size:8.2px;letter-spacing:-0.15px">24</span><span style="font-size:7.7px">日</span><span style="font-size:8.2px;letter-spacing:-0.15px"> 10:39:28</span></div>
<div class="ab" style="left:371.80px;top:737.28px;width:21.4px;height:14.5px;background:#2590e8;border-radius:1.5px;color:#fff;font-size:7.5px;line-height:16.5px;overflow:hidden;text-align:center">自动</div>
<div class="t " style="left:436.30px;top:740.48px;font-size:8.0px;line-height:8.0px;color:#6b6b6b;"><span style="font-size:8.2px;letter-spacing:-0.15px">204.00</span></div>
<div class="t " style="left:654.70px;top:740.48px;font-size:8.0px;line-height:8.0px;color:#6b6b6b;"><span style="font-size:8.2px;letter-spacing:-0.15px">0948559735</span></div>
<div class="t " style="left:731.40px;top:740.48px;font-size:8.0px;line-height:8.0px;color:#6b6b6b;"><span style="font-size:8.2px;letter-spacing:-0.15px">Nguyen Bich Ngoc</span></div>
<div class="t " style="left:828.60px;top:740.48px;font-size:8.0px;line-height:8.0px;color:#6b6b6b;"><span style="font-size:8.2px;letter-spacing:-0.15px">VIP0</span></div>
<div class="t " style="left:879.50px;top:740.48px;font-size:8.0px;line-height:8.0px;color:#6b6b6b;"><span style="font-size:8.2px;letter-spacing:-0.15px">-</span></div>
<div class="t " style="left:982.30px;top:740.48px;font-size:8.0px;line-height:8.0px;color:#6b6b6b;"><span style="font-size:8.2px;letter-spacing:-0.15px">0</span></div>
<div class="t " style="left:1059.20px;top:740.48px;font-size:8.0px;line-height:8.0px;color:#6b6b6b;"><span style="font-size:8.2px;letter-spacing:-0.15px">0</span></div>
<div class="t " style="left:1137.00px;top:740.48px;font-size:8.0px;line-height:8.0px;color:#6b6b6b;"><span style="font-size:8.2px;letter-spacing:-0.15px">0</span></div>
<div class="t " style="left:1214.20px;top:740.48px;font-size:8.0px;line-height:8.0px;color:#6b6b6b;"><span style="font-size:8.2px;letter-spacing:-0.15px">204.00</span></div>
<div class="t " style="left:1291.50px;top:740.48px;font-size:8.0px;line-height:8.0px;color:#6b6b6b;"><span style="font-size:8.2px;letter-spacing:-0.15px">0</span></div>
<div class="t " style="left:1368.20px;top:740.48px;font-size:8.0px;line-height:8.0px;color:#6b6b6b;"><span style="font-size:8.2px;letter-spacing:-0.15px">0</span></div>
<div class="ab" style="left:1443.20px;top:737.48px;width:21.6px;height:14px;background:#e41019;border-radius:1.5px;color:#fff;font-size:7.5px;line-height:15.8px;overflow:hidden;text-align:center;white-space:nowrap">自动</div>
<div class="ab" style="left:1471.20px;top:737.48px;width:21.6px;height:14px;background:#f05a24;border-radius:1.5px;color:#fff;font-size:7.5px;line-height:15.8px;overflow:hidden;text-align:center;white-space:nowrap">打针</div>
<div class="ab" style="left:1499.30px;top:737.48px;width:36.7px;height:14px;background:#2590e8;border-radius:1.5px;color:#fff;font-size:7.5px;line-height:15.8px;overflow:hidden;text-align:center;white-space:nowrap">设置连单</div>
<div class="ab" style="left:1542.60px;top:737.48px;width:21.5px;height:14px;background:#f05a24;border-radius:1.5px;color:#fff;font-size:7.5px;line-height:15.8px;overflow:hidden;text-align:center;white-space:nowrap">等级</div>
<div class="ab" style="left:163.5px;top:770.34px;width:12px;height:12px;border:1px solid #d9d9d9;border-radius:1px;background:#fff"></div>
<div class="t " style="left:192.20px;top:773.04px;font-size:8.0px;line-height:8.0px;color:#6b6b6b;"><span style="font-size:8.2px;letter-spacing:-0.15px">343</span></div>
<div class="t " style="left:243.60px;top:773.04px;font-size:8.0px;line-height:8.0px;color:#6b6b6b;"><span style="font-size:8.2px;letter-spacing:-0.15px">2023</span><span style="font-size:7.7px">年</span><span style="font-size:8.2px;letter-spacing:-0.15px">10</span><span style="font-size:7.7px">月</span><span style="font-size:8.2px;letter-spacing:-0.15px">23</span><span style="font-size:7.7px">日</span><span style="font-size:8.2px;letter-spacing:-0.15px"> 22:42:10</span></div>
<div class="ab" style="left:371.80px;top:769.84px;width:21.4px;height:14.5px;background:#2590e8;border-radius:1.5px;color:#fff;font-size:7.5px;line-height:16.5px;overflow:hidden;text-align:center">自动</div>
<div class="t " style="left:654.70px;top:773.04px;font-size:8.0px;line-height:8.0px;color:#6b6b6b;"><span style="font-size:8.2px;letter-spacing:-0.15px">0916250491</span></div>
<div class="t " style="left:731.40px;top:773.04px;font-size:8.0px;line-height:8.0px;color:#6b6b6b;"><span style="font-size:8.2px;letter-spacing:-0.15px">Phan Quốc Tuệ</span></div>
<div class="t " style="left:828.60px;top:773.04px;font-size:8.0px;line-height:8.0px;color:#6b6b6b;"><span style="font-size:8.2px;letter-spacing:-0.15px">VIP0</span></div>
<div class="t " style="left:879.50px;top:773.04px;font-size:8.0px;line-height:8.0px;color:#6b6b6b;"><span style="font-size:8.2px;letter-spacing:-0.15px">-</span></div>
<div class="t " style="left:982.30px;top:773.04px;font-size:8.0px;line-height:8.0px;color:#6b6b6b;"><span style="font-size:8.2px;letter-spacing:-0.15px">0</span></div>
<div class="t " style="left:1059.20px;top:773.04px;font-size:8.0px;line-height:8.0px;color:#6b6b6b;"><span style="font-size:8.2px;letter-spacing:-0.15px">0</span></div>
<div class="t " style="left:1137.00px;top:773.04px;font-size:8.0px;line-height:8.0px;color:#6b6b6b;"><span style="font-size:8.2px;letter-spacing:-0.15px">0</span></div>
<div class="t " style="left:1214.20px;top:773.04px;font-size:8.0px;line-height:8.0px;color:#6b6b6b;"><span style="font-size:8.2px;letter-spacing:-0.15px">0.00</span></div>
<div class="t " style="left:1291.50px;top:773.04px;font-size:8.0px;line-height:8.0px;color:#6b6b6b;"><span style="font-size:8.2px;letter-spacing:-0.15px">0</span></div>
<div class="t " style="left:1368.20px;top:773.04px;font-size:8.0px;line-height:8.0px;color:#6b6b6b;"><span style="font-size:8.2px;letter-spacing:-0.15px">0</span></div>
<div class="ab" style="left:1443.20px;top:770.04px;width:21.6px;height:14px;background:#e41019;border-radius:1.5px;color:#fff;font-size:7.5px;line-height:15.8px;overflow:hidden;text-align:center;white-space:nowrap">自动</div>
<div class="ab" style="left:1471.20px;top:770.04px;width:21.6px;height:14px;background:#f05a24;border-radius:1.5px;color:#fff;font-size:7.5px;line-height:15.8px;overflow:hidden;text-align:center;white-space:nowrap">打针</div>
<div class="ab" style="left:1499.30px;top:770.04px;width:36.7px;height:14px;background:#2590e8;border-radius:1.5px;color:#fff;font-size:7.5px;line-height:15.8px;overflow:hidden;text-align:center;white-space:nowrap">设置连单</div>
<div class="ab" style="left:1542.60px;top:770.04px;width:21.5px;height:14px;background:#f05a24;border-radius:1.5px;color:#fff;font-size:7.5px;line-height:15.8px;overflow:hidden;text-align:center;white-space:nowrap">等级</div>
<div class="ab" style="left:163.5px;top:802.90px;width:12px;height:12px;border:1px solid #d9d9d9;border-radius:1px;background:#fff"></div>
<div class="t " style="left:192.20px;top:805.60px;font-size:8.0px;line-height:8.0px;color:#6b6b6b;"><span style="font-size:8.2px;letter-spacing:-0.15px">342</span></div>
<div class="t " style="left:243.60px;top:805.60px;font-size:8.0px;line-height:8.0px;color:#6b6b6b;"><span style="font-size:8.2px;letter-spacing:-0.15px">2023</span><span style="font-size:7.7px">年</span><span style="font-size:8.2px;letter-spacing:-0.15px">10</span><span style="font-size:7.7px">月</span><span style="font-size:8.2px;letter-spacing:-0.15px">23</span><span style="font-size:7.7px">日</span><span style="font-size:8.2px;letter-spacing:-0.15px"> 21:50:10</span></div>
<div class="ab" style="left:371.80px;top:802.40px;width:21.4px;height:14.5px;background:#2590e8;border-radius:1.5px;color:#fff;font-size:7.5px;line-height:16.5px;overflow:hidden;text-align:center">自动</div>
<div class="t " style="left:436.30px;top:805.60px;font-size:8.0px;line-height:8.0px;color:#6b6b6b;"><span style="font-size:8.2px;letter-spacing:-0.15px">2000.00</span></div>
<div class="t " style="left:654.70px;top:805.60px;font-size:8.0px;line-height:8.0px;color:#6b6b6b;"><span style="font-size:8.2px;letter-spacing:-0.15px">03934056759</span></div>
<div class="t " style="left:731.40px;top:805.60px;font-size:8.0px;line-height:8.0px;color:#6b6b6b;"><span style="font-size:8.2px;letter-spacing:-0.15px">Nguyễn Ngọc</span></div>
<div class="t " style="left:828.60px;top:805.60px;font-size:8.0px;line-height:8.0px;color:#6b6b6b;"><span style="font-size:8.2px;letter-spacing:-0.15px">VIP2</span></div>
<div class="t " style="left:879.50px;top:805.60px;font-size:8.0px;line-height:8.0px;color:#6b6b6b;"><span style="font-size:8.2px;letter-spacing:-0.15px">-</span></div>
<div class="t " style="left:982.30px;top:805.60px;font-size:8.0px;line-height:8.0px;color:#6b6b6b;"><span style="font-size:8.2px;letter-spacing:-0.15px">174</span></div>
<div class="t " style="left:1059.20px;top:805.60px;font-size:8.0px;line-height:8.0px;color:#6b6b6b;"><span style="font-size:8.2px;letter-spacing:-0.15px">174</span></div>
<div class="t " style="left:1137.00px;top:805.60px;font-size:8.0px;line-height:8.0px;color:#6b6b6b;"><span style="font-size:8.2px;letter-spacing:-0.15px">0</span></div>
<div class="t " style="left:1214.20px;top:805.60px;font-size:8.0px;line-height:8.0px;color:#6b6b6b;"><span style="font-size:8.2px;letter-spacing:-0.15px">1063.30</span></div>
<div class="t " style="left:1291.50px;top:805.60px;font-size:8.0px;line-height:8.0px;color:#6b6b6b;"><span style="font-size:8.2px;letter-spacing:-0.15px">1413.18</span></div>
<div class="t " style="left:1368.20px;top:805.60px;font-size:8.0px;line-height:8.0px;color:#6b6b6b;"><span style="font-size:8.2px;letter-spacing:-0.15px">0</span></div>
<div class="ab" style="left:1443.20px;top:802.60px;width:21.6px;height:14px;background:#e41019;border-radius:1.5px;color:#fff;font-size:7.5px;line-height:15.8px;overflow:hidden;text-align:center;white-space:nowrap">自动</div>
<div class="ab" style="left:1471.20px;top:802.60px;width:21.6px;height:14px;background:#f05a24;border-radius:1.5px;color:#fff;font-size:7.5px;line-height:15.8px;overflow:hidden;text-align:center;white-space:nowrap">打针</div>
<div class="ab" style="left:1499.30px;top:802.60px;width:36.7px;height:14px;background:#2590e8;border-radius:1.5px;color:#fff;font-size:7.5px;line-height:15.8px;overflow:hidden;text-align:center;white-space:nowrap">设置连单</div>
<div class="ab" style="left:1542.60px;top:802.60px;width:21.5px;height:14px;background:#f05a24;border-radius:1.5px;color:#fff;font-size:7.5px;line-height:15.8px;overflow:hidden;text-align:center;white-space:nowrap">等级</div>
<div class="ab" style="left:163.5px;top:835.46px;width:12px;height:12px;border:1px solid #d9d9d9;border-radius:1px;background:#fff"></div>
<div class="t " style="left:192.20px;top:838.16px;font-size:8.0px;line-height:8.0px;color:#6b6b6b;"><span style="font-size:8.2px;letter-spacing:-0.15px">341</span></div>
<div class="t " style="left:243.60px;top:838.16px;font-size:8.0px;line-height:8.0px;color:#6b6b6b;"><span style="font-size:8.2px;letter-spacing:-0.15px">2023</span><span style="font-size:7.7px">年</span><span style="font-size:8.2px;letter-spacing:-0.15px">10</span><span style="font-size:7.7px">月</span><span style="font-size:8.2px;letter-spacing:-0.15px">23</span><span style="font-size:7.7px">日</span><span style="font-size:8.2px;letter-spacing:-0.15px"> 21:40:10</span></div>
<div class="ab" style="left:371.80px;top:834.96px;width:21.4px;height:14.5px;background:#2590e8;border-radius:1.5px;color:#fff;font-size:7.5px;line-height:16.5px;overflow:hidden;text-align:center">自动</div>
<div class="t " style="left:654.70px;top:838.16px;font-size:8.0px;line-height:8.0px;color:#6b6b6b;"><span style="font-size:8.2px;letter-spacing:-0.15px">0912345678</span></div>
<div class="t " style="left:731.40px;top:838.16px;font-size:8.0px;line-height:8.0px;color:#6b6b6b;"><span style="font-size:8.2px;letter-spacing:-0.15px">Nguyễn Văn</span></div>
<div class="t " style="left:828.60px;top:838.16px;font-size:8.0px;line-height:8.0px;color:#6b6b6b;"><span style="font-size:8.2px;letter-spacing:-0.15px">VIP0</span></div>
<div class="t " style="left:879.50px;top:838.16px;font-size:8.0px;line-height:8.0px;color:#6b6b6b;"><span style="font-size:8.2px;letter-spacing:-0.15px">-</span></div>
<div class="t " style="left:982.30px;top:838.16px;font-size:8.0px;line-height:8.0px;color:#6b6b6b;"><span style="font-size:8.2px;letter-spacing:-0.15px">0</span></div>
<div class="t " style="left:1059.20px;top:838.16px;font-size:8.0px;line-height:8.0px;color:#6b6b6b;"><span style="font-size:8.2px;letter-spacing:-0.15px">0</span></div>
<div class="t " style="left:1137.00px;top:838.16px;font-size:8.0px;line-height:8.0px;color:#6b6b6b;"><span style="font-size:8.2px;letter-spacing:-0.15px">0</span></div>
<div class="t " style="left:1214.20px;top:838.16px;font-size:8.0px;line-height:8.0px;color:#6b6b6b;"><span style="font-size:8.2px;letter-spacing:-0.15px">0.00</span></div>
<div class="t " style="left:1291.50px;top:838.16px;font-size:8.0px;line-height:8.0px;color:#6b6b6b;"><span style="font-size:8.2px;letter-spacing:-0.15px">0</span></div>
<div class="t " style="left:1368.20px;top:838.16px;font-size:8.0px;line-height:8.0px;color:#6b6b6b;"><span style="font-size:8.2px;letter-spacing:-0.15px">0</span></div>
<div class="ab" style="left:1443.20px;top:835.16px;width:21.6px;height:14px;background:#e41019;border-radius:1.5px;color:#fff;font-size:7.5px;line-height:15.8px;overflow:hidden;text-align:center;white-space:nowrap">自动</div>
<div class="ab" style="left:1471.20px;top:835.16px;width:21.6px;height:14px;background:#f05a24;border-radius:1.5px;color:#fff;font-size:7.5px;line-height:15.8px;overflow:hidden;text-align:center;white-space:nowrap">打针</div>
<div class="ab" style="left:1499.30px;top:835.16px;width:36.7px;height:14px;background:#2590e8;border-radius:1.5px;color:#fff;font-size:7.5px;line-height:15.8px;overflow:hidden;text-align:center;white-space:nowrap">设置连单</div>
<div class="ab" style="left:1542.60px;top:835.16px;width:21.5px;height:14px;background:#f05a24;border-radius:1.5px;color:#fff;font-size:7.5px;line-height:15.8px;overflow:hidden;text-align:center;white-space:nowrap">等级</div>
</body></html>
